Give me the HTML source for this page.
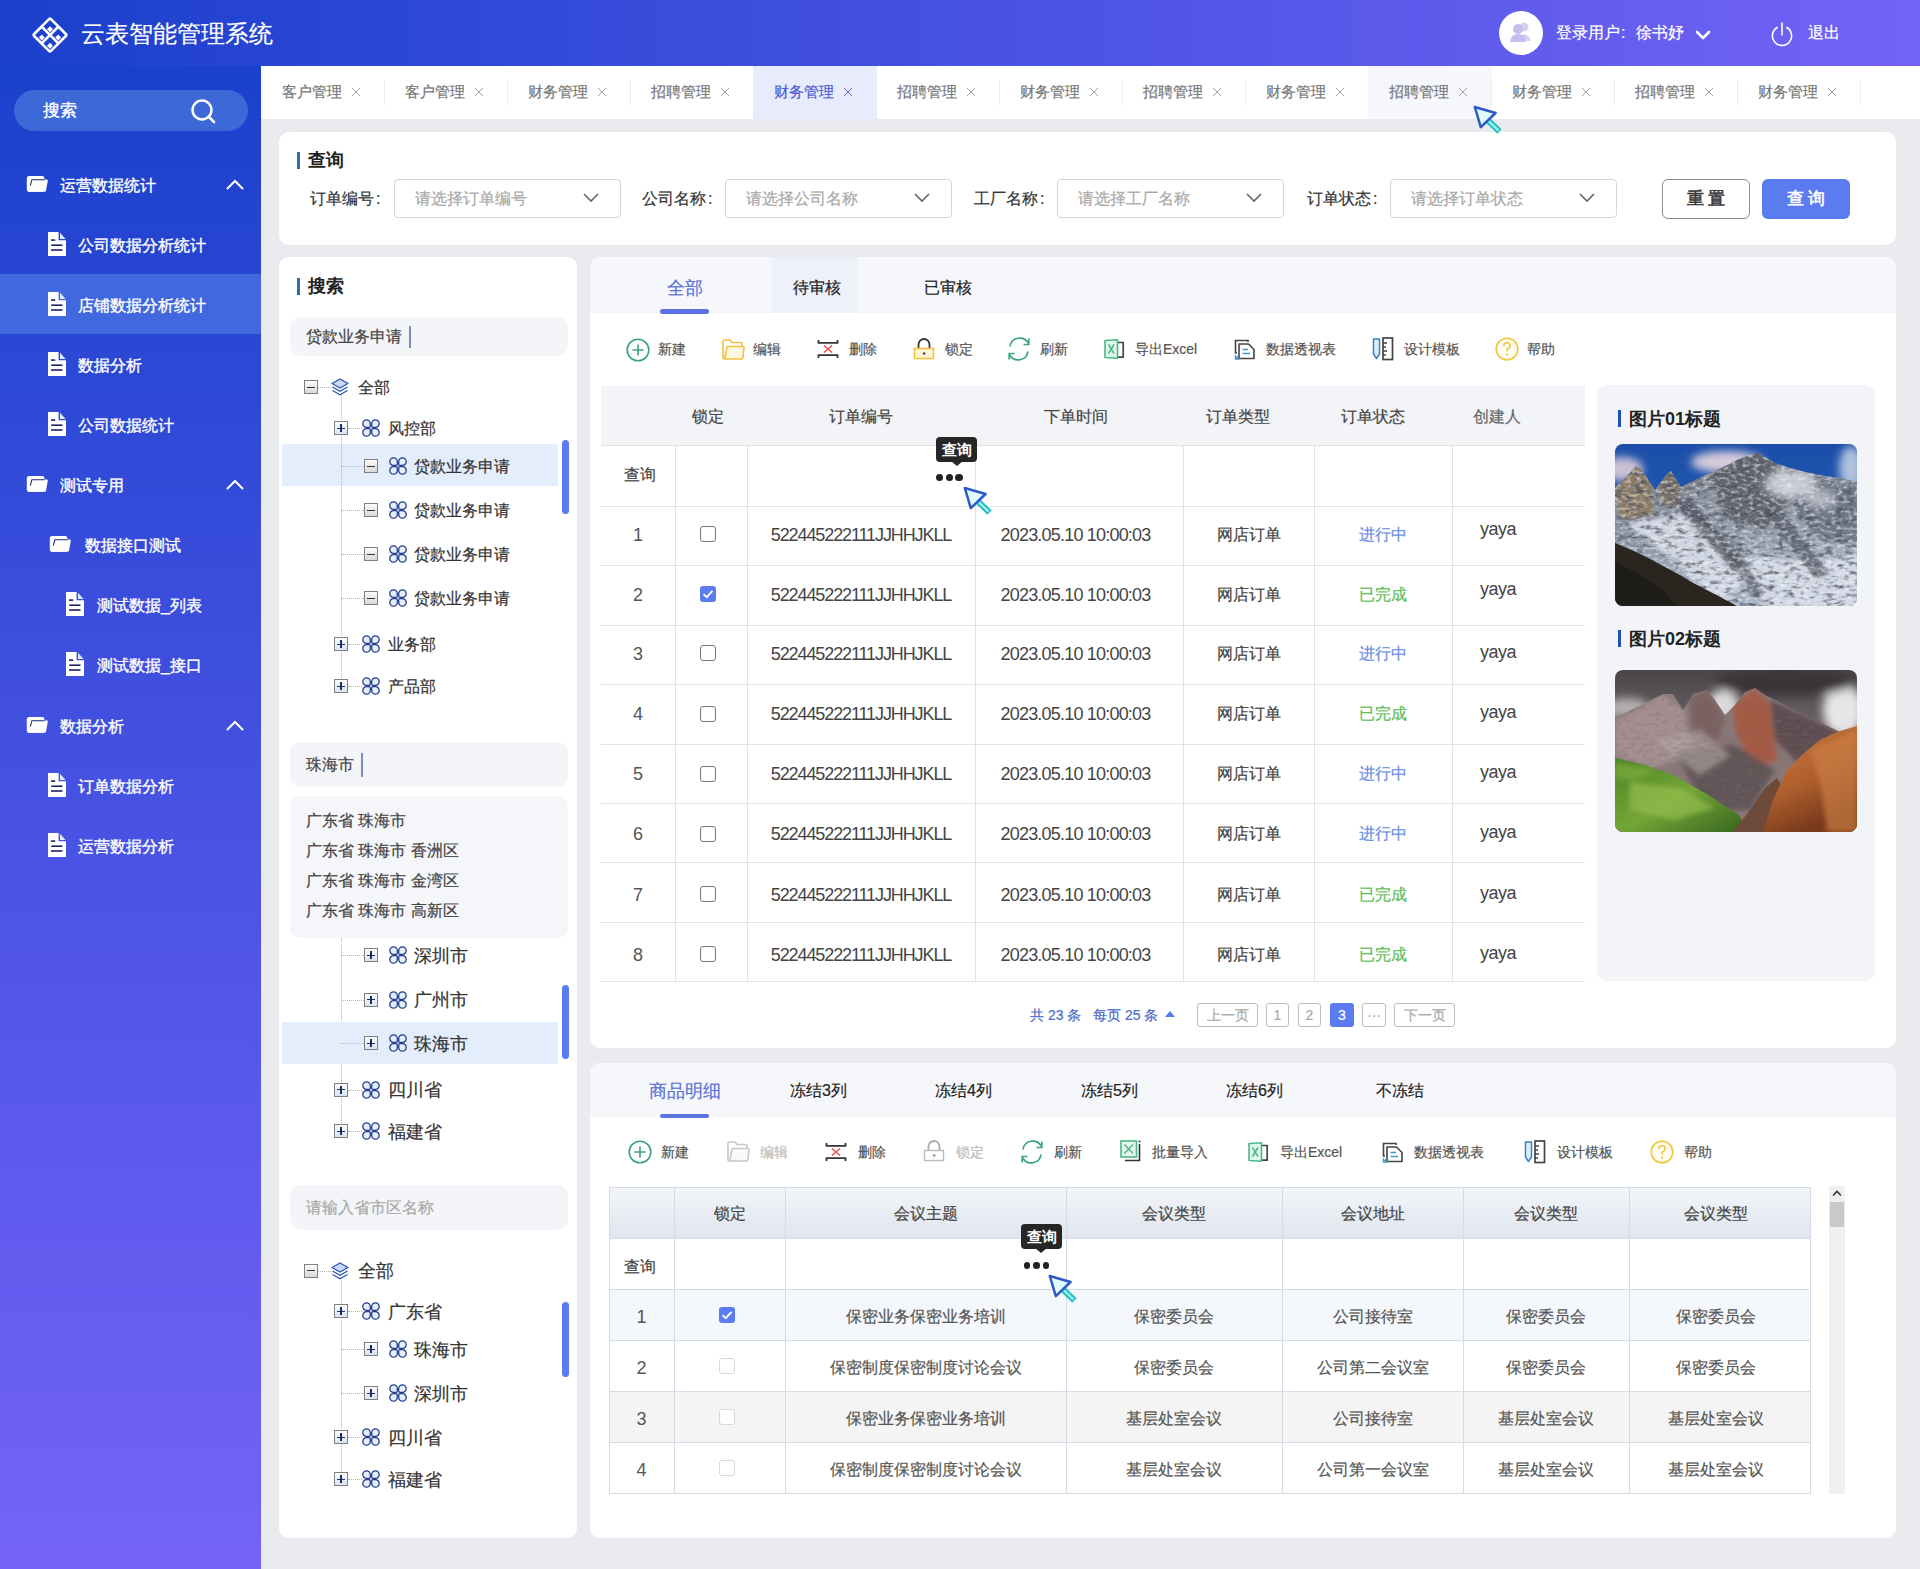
<!DOCTYPE html>
<html><head><meta charset="utf-8"><style>
*{box-sizing:border-box;margin:0;padding:0}
html,body{width:1920px;height:1569px;overflow:hidden}
body{font-family:"Liberation Sans",sans-serif;background:#e9ebef;position:relative;color:#333}
.a{position:absolute}
.t{position:absolute;white-space:nowrap;line-height:1;-webkit-text-stroke:0.2px currentColor}
.t[style*=bold]{-webkit-text-stroke:0}
.card{position:absolute;background:#fff;border-radius:10px}
.side-t{color:#fff;font-size:16px;-webkit-text-stroke:0.35px #fff}
</style></head><body>
<div class="a" style="left:0;top:0;width:1920px;height:66px;background:linear-gradient(90deg,#1a40cc 0%,#7363f6 100%)"></div>
<svg class="a" style="left:30px;top:15px" width="40" height="40" viewBox="-20 -20 40 40">
<g transform="rotate(45)">
<path fill="#fff" fill-rule="evenodd" d="M-10.5,-13.2 H10.5 A2.7,2.7 0 0 1 13.2,-10.5 V10.5 A2.7,2.7 0 0 1 10.5,13.2 H-10.5 A2.7,2.7 0 0 1 -13.2,10.5 V-10.5 A2.7,2.7 0 0 1 -10.5,-13.2 Z M-10.6,-10.6 H-1.3 V-1.3 H-10.6 Z M1.3,-10.6 H10.6 V-1.3 H1.3 Z M-10.6,1.3 H-1.3 V10.6 H-10.6 Z M1.3,1.3 H10.6 V10.6 H1.3 Z"/>
<rect x="-6.1" y="-6.1" width="4.2" height="4.2" fill="#fff"/><rect x="5.5" y="-6.1" width="4.2" height="4.2" fill="#fff"/>
<rect x="-6.1" y="5.5" width="4.2" height="4.2" fill="#fff"/><rect x="5.5" y="5.5" width="4.2" height="4.2" fill="#fff"/>
</g></svg>
<div class="t" style="left:81px;top:22px;font-size:24px;color:#fff">云表智能管理系统</div>
<div class="a" style="left:1499px;top:11px;width:44px;height:44px;border-radius:50%;background:#fff"></div>
<svg class="a" style="left:1507px;top:19px" width="28" height="28" viewBox="0 0 28 28">
<circle cx="17" cy="8" r="4.5" fill="#d6d2f4"/><path d="M14 16 Q22 14 24 22 L14 22Z" fill="#d6d2f4"/>
<circle cx="11" cy="10" r="5" fill="#c4bff0"/><path d="M3 23 Q4 15 11 15 Q18 15 19 23 Z" fill="#c4bff0"/></svg>
<div class="t" style="left:1556px;top:25px;font-size:16px;color:#fff">登录用户</div>
<div class="t" style="left:1621px;top:25px;font-size:16px;color:#fff">:</div>
<div class="t" style="left:1636px;top:25px;font-size:16px;color:#fff">徐书妤</div>
<svg class="a" style="left:1695px;top:29px" width="16" height="12" viewBox="0 0 16 12"><path d="M2 3 L8 9 L14 3" stroke="#fff" stroke-width="2.6" fill="none" stroke-linecap="round" stroke-linejoin="round"/></svg>
<svg class="a" style="left:1769px;top:21px" width="26" height="26" viewBox="0 0 26 26"><path d="M8.2 6.5 A9.6 9.6 0 1 0 17.8 6.5" stroke="#fff" stroke-width="1.6" fill="none" stroke-linecap="round"/><path d="M13 2 V14" stroke="#fff" stroke-width="1.6" stroke-linecap="round"/></svg>
<div class="t" style="left:1808px;top:25px;font-size:16px;color:#fff">退出</div>
<div class="a" style="left:0;top:66px;width:261px;height:1503px;background:linear-gradient(180deg,#1a41cc 0%,#7563f8 100%)"></div>
<div class="a" style="left:14px;top:90px;width:234px;height:41px;border-radius:21px;background:#3d68d8"></div>
<div class="t side-t" style="left:43px;top:102px;font-size:17px">搜索</div>
<svg class="a" style="left:189px;top:97px" width="28" height="28" viewBox="0 0 28 28"><circle cx="13" cy="13" r="9.5" stroke="#fff" stroke-width="2.4" fill="none"/><path d="M20 20 L25 25" stroke="#fff" stroke-width="2.6" stroke-linecap="round"/></svg>
<div class="a" style="left:0;top:274px;width:261px;height:60px;background:#4168de"></div>
<svg class="a" style="left:26px;top:175px" width="23" height="18" viewBox="0 0 23 18"><rect x="0.8" y="1" width="17.6" height="15.8" rx="2.2" fill="#fff"/><path d="M5.8 4.6 H20.8 Q22 4.6 21.8 5.8 L20 15.6 Q19.8 16.8 18.6 16.8 H2 Z" fill="#fff"/><path d="M18.6 4.7 H5.9 L4.3 10.6" fill="none" stroke="#1c2c72" stroke-width="1.1"/></svg><div class="t side-t" style="left:60px;top:177.5px">运营数据统计</div><svg class="a" style="left:226px;top:179px" width="18" height="11" viewBox="0 0 18 11"><path d="M1.5 9.5 L9 2 L16.5 9.5" stroke="#fff" stroke-width="2" fill="none" stroke-linecap="round"/></svg>
<svg class="a" style="left:48px;top:232px" width="18" height="24" viewBox="0 0 18 24"><path d="M0 0 H10.6 V8.2 H18 V24 H0Z" fill="#fff"/><path d="M12 0.8 V7 H17.6Z" fill="#dcecff"/><rect x="3" y="7.3" width="4.2" height="1.6" fill="#1c2466"/><rect x="3.3" y="12.4" width="11.2" height="1.6" fill="#1c2466"/><rect x="3" y="17.2" width="11.5" height="1.6" fill="#1c2466"/></svg><div class="t side-t" style="left:78px;top:237.5px">公司数据分析统计</div>
<svg class="a" style="left:48px;top:292px" width="18" height="24" viewBox="0 0 18 24"><path d="M0 0 H10.6 V8.2 H18 V24 H0Z" fill="#fff"/><path d="M12 0.8 V7 H17.6Z" fill="#dcecff"/><rect x="3" y="7.3" width="4.2" height="1.6" fill="#1c2466"/><rect x="3.3" y="12.4" width="11.2" height="1.6" fill="#1c2466"/><rect x="3" y="17.2" width="11.5" height="1.6" fill="#1c2466"/></svg><div class="t side-t" style="left:78px;top:297.5px">店铺数据分析统计</div>
<svg class="a" style="left:48px;top:352px" width="18" height="24" viewBox="0 0 18 24"><path d="M0 0 H10.6 V8.2 H18 V24 H0Z" fill="#fff"/><path d="M12 0.8 V7 H17.6Z" fill="#dcecff"/><rect x="3" y="7.3" width="4.2" height="1.6" fill="#1c2466"/><rect x="3.3" y="12.4" width="11.2" height="1.6" fill="#1c2466"/><rect x="3" y="17.2" width="11.5" height="1.6" fill="#1c2466"/></svg><div class="t side-t" style="left:78px;top:357.5px">数据分析</div>
<svg class="a" style="left:48px;top:412px" width="18" height="24" viewBox="0 0 18 24"><path d="M0 0 H10.6 V8.2 H18 V24 H0Z" fill="#fff"/><path d="M12 0.8 V7 H17.6Z" fill="#dcecff"/><rect x="3" y="7.3" width="4.2" height="1.6" fill="#1c2466"/><rect x="3.3" y="12.4" width="11.2" height="1.6" fill="#1c2466"/><rect x="3" y="17.2" width="11.5" height="1.6" fill="#1c2466"/></svg><div class="t side-t" style="left:78px;top:417.5px">公司数据统计</div>
<svg class="a" style="left:26px;top:475px" width="23" height="18" viewBox="0 0 23 18"><rect x="0.8" y="1" width="17.6" height="15.8" rx="2.2" fill="#fff"/><path d="M5.8 4.6 H20.8 Q22 4.6 21.8 5.8 L20 15.6 Q19.8 16.8 18.6 16.8 H2 Z" fill="#fff"/><path d="M18.6 4.7 H5.9 L4.3 10.6" fill="none" stroke="#1c2c72" stroke-width="1.1"/></svg><div class="t side-t" style="left:60px;top:477.5px">测试专用</div><svg class="a" style="left:226px;top:479px" width="18" height="11" viewBox="0 0 18 11"><path d="M1.5 9.5 L9 2 L16.5 9.5" stroke="#fff" stroke-width="2" fill="none" stroke-linecap="round"/></svg>
<svg class="a" style="left:49px;top:535px" width="23" height="18" viewBox="0 0 23 18"><rect x="0.8" y="1" width="17.6" height="15.8" rx="2.2" fill="#fff"/><path d="M5.8 4.6 H20.8 Q22 4.6 21.8 5.8 L20 15.6 Q19.8 16.8 18.6 16.8 H2 Z" fill="#fff"/><path d="M18.6 4.7 H5.9 L4.3 10.6" fill="none" stroke="#1c2c72" stroke-width="1.1"/></svg><div class="t side-t" style="left:85px;top:537.5px">数据接口测试</div>
<svg class="a" style="left:66px;top:592px" width="18" height="24" viewBox="0 0 18 24"><path d="M0 0 H10.6 V8.2 H18 V24 H0Z" fill="#fff"/><path d="M12 0.8 V7 H17.6Z" fill="#dcecff"/><rect x="3" y="7.3" width="4.2" height="1.6" fill="#1c2466"/><rect x="3.3" y="12.4" width="11.2" height="1.6" fill="#1c2466"/><rect x="3" y="17.2" width="11.5" height="1.6" fill="#1c2466"/></svg><div class="t side-t" style="left:97px;top:597.5px">测试数据_列表</div>
<svg class="a" style="left:66px;top:652px" width="18" height="24" viewBox="0 0 18 24"><path d="M0 0 H10.6 V8.2 H18 V24 H0Z" fill="#fff"/><path d="M12 0.8 V7 H17.6Z" fill="#dcecff"/><rect x="3" y="7.3" width="4.2" height="1.6" fill="#1c2466"/><rect x="3.3" y="12.4" width="11.2" height="1.6" fill="#1c2466"/><rect x="3" y="17.2" width="11.5" height="1.6" fill="#1c2466"/></svg><div class="t side-t" style="left:97px;top:657.5px">测试数据_接口</div>
<svg class="a" style="left:26px;top:716px" width="23" height="18" viewBox="0 0 23 18"><rect x="0.8" y="1" width="17.6" height="15.8" rx="2.2" fill="#fff"/><path d="M5.8 4.6 H20.8 Q22 4.6 21.8 5.8 L20 15.6 Q19.8 16.8 18.6 16.8 H2 Z" fill="#fff"/><path d="M18.6 4.7 H5.9 L4.3 10.6" fill="none" stroke="#1c2c72" stroke-width="1.1"/></svg><div class="t side-t" style="left:60px;top:718.5px">数据分析</div><svg class="a" style="left:226px;top:720px" width="18" height="11" viewBox="0 0 18 11"><path d="M1.5 9.5 L9 2 L16.5 9.5" stroke="#fff" stroke-width="2" fill="none" stroke-linecap="round"/></svg>
<svg class="a" style="left:48px;top:773px" width="18" height="24" viewBox="0 0 18 24"><path d="M0 0 H10.6 V8.2 H18 V24 H0Z" fill="#fff"/><path d="M12 0.8 V7 H17.6Z" fill="#dcecff"/><rect x="3" y="7.3" width="4.2" height="1.6" fill="#1c2466"/><rect x="3.3" y="12.4" width="11.2" height="1.6" fill="#1c2466"/><rect x="3" y="17.2" width="11.5" height="1.6" fill="#1c2466"/></svg><div class="t side-t" style="left:78px;top:778.5px">订单数据分析</div>
<svg class="a" style="left:48px;top:833px" width="18" height="24" viewBox="0 0 18 24"><path d="M0 0 H10.6 V8.2 H18 V24 H0Z" fill="#fff"/><path d="M12 0.8 V7 H17.6Z" fill="#dcecff"/><rect x="3" y="7.3" width="4.2" height="1.6" fill="#1c2466"/><rect x="3.3" y="12.4" width="11.2" height="1.6" fill="#1c2466"/><rect x="3" y="17.2" width="11.5" height="1.6" fill="#1c2466"/></svg><div class="t side-t" style="left:78px;top:838.5px">运营数据分析</div>
<div class="a" style="left:261px;top:66px;width:1659px;height:53px;background:#fff"></div>
<div class="t" style="left:282px;top:84px;font-size:15px;color:#777">客户管理</div>
<svg class="a" style="left:351px;top:87px" width="10" height="10" viewBox="0 0 10 10"><path d="M1 1 L9 9 M9 1 L1 9" stroke="#999" stroke-width="0.9"/></svg>
<div class="a" style="left:384px;top:80px;width:1px;height:25px;background:#ececec"></div>
<div class="t" style="left:405px;top:84px;font-size:15px;color:#777">客户管理</div>
<svg class="a" style="left:474px;top:87px" width="10" height="10" viewBox="0 0 10 10"><path d="M1 1 L9 9 M9 1 L1 9" stroke="#999" stroke-width="0.9"/></svg>
<div class="a" style="left:507px;top:80px;width:1px;height:25px;background:#ececec"></div>
<div class="t" style="left:528px;top:84px;font-size:15px;color:#777">财务管理</div>
<svg class="a" style="left:597px;top:87px" width="10" height="10" viewBox="0 0 10 10"><path d="M1 1 L9 9 M9 1 L1 9" stroke="#999" stroke-width="0.9"/></svg>
<div class="a" style="left:630px;top:80px;width:1px;height:25px;background:#ececec"></div>
<div class="t" style="left:651px;top:84px;font-size:15px;color:#777">招聘管理</div>
<svg class="a" style="left:720px;top:87px" width="10" height="10" viewBox="0 0 10 10"><path d="M1 1 L9 9 M9 1 L1 9" stroke="#999" stroke-width="0.9"/></svg>
<div class="a" style="left:753px;top:66px;width:124px;height:53px;background:#e8ebfb"></div>
<div class="t" style="left:774px;top:84px;font-size:15px;color:#4a5bd6">财务管理</div>
<svg class="a" style="left:843px;top:87px" width="10" height="10" viewBox="0 0 10 10"><path d="M1 1 L9 9 M9 1 L1 9" stroke="#4a5bd6" stroke-width="0.9"/></svg>
<div class="t" style="left:897px;top:84px;font-size:15px;color:#777">招聘管理</div>
<svg class="a" style="left:966px;top:87px" width="10" height="10" viewBox="0 0 10 10"><path d="M1 1 L9 9 M9 1 L1 9" stroke="#999" stroke-width="0.9"/></svg>
<div class="a" style="left:999px;top:80px;width:1px;height:25px;background:#ececec"></div>
<div class="t" style="left:1020px;top:84px;font-size:15px;color:#777">财务管理</div>
<svg class="a" style="left:1089px;top:87px" width="10" height="10" viewBox="0 0 10 10"><path d="M1 1 L9 9 M9 1 L1 9" stroke="#999" stroke-width="0.9"/></svg>
<div class="a" style="left:1122px;top:80px;width:1px;height:25px;background:#ececec"></div>
<div class="t" style="left:1143px;top:84px;font-size:15px;color:#777">招聘管理</div>
<svg class="a" style="left:1212px;top:87px" width="10" height="10" viewBox="0 0 10 10"><path d="M1 1 L9 9 M9 1 L1 9" stroke="#999" stroke-width="0.9"/></svg>
<div class="a" style="left:1245px;top:80px;width:1px;height:25px;background:#ececec"></div>
<div class="t" style="left:1266px;top:84px;font-size:15px;color:#777">财务管理</div>
<svg class="a" style="left:1335px;top:87px" width="10" height="10" viewBox="0 0 10 10"><path d="M1 1 L9 9 M9 1 L1 9" stroke="#999" stroke-width="0.9"/></svg>
<div class="a" style="left:1368px;top:80px;width:1px;height:25px;background:#ececec"></div>
<div class="a" style="left:1368px;top:66px;width:124px;height:53px;background:#f6f7fc"></div>
<div class="t" style="left:1389px;top:84px;font-size:15px;color:#777">招聘管理</div>
<svg class="a" style="left:1458px;top:87px" width="10" height="10" viewBox="0 0 10 10"><path d="M1 1 L9 9 M9 1 L1 9" stroke="#999" stroke-width="0.9"/></svg>
<div class="a" style="left:1491px;top:80px;width:1px;height:25px;background:#ececec"></div>
<div class="t" style="left:1512px;top:84px;font-size:15px;color:#777">财务管理</div>
<svg class="a" style="left:1581px;top:87px" width="10" height="10" viewBox="0 0 10 10"><path d="M1 1 L9 9 M9 1 L1 9" stroke="#999" stroke-width="0.9"/></svg>
<div class="a" style="left:1614px;top:80px;width:1px;height:25px;background:#ececec"></div>
<div class="t" style="left:1635px;top:84px;font-size:15px;color:#777">招聘管理</div>
<svg class="a" style="left:1704px;top:87px" width="10" height="10" viewBox="0 0 10 10"><path d="M1 1 L9 9 M9 1 L1 9" stroke="#999" stroke-width="0.9"/></svg>
<div class="a" style="left:1737px;top:80px;width:1px;height:25px;background:#ececec"></div>
<div class="t" style="left:1758px;top:84px;font-size:15px;color:#777">财务管理</div>
<svg class="a" style="left:1827px;top:87px" width="10" height="10" viewBox="0 0 10 10"><path d="M1 1 L9 9 M9 1 L1 9" stroke="#999" stroke-width="0.9"/></svg>
<div class="a" style="left:1860px;top:80px;width:1px;height:25px;background:#ececec"></div>
<div class="card" style="left:279px;top:132px;width:1617px;height:113px"></div>
<div class="a" style="left:297px;top:152px;width:3px;height:17px;background:#2d6db3"></div>
<div class="t" style="left:308px;top:151px;font-size:18px;font-weight:bold;color:#222">查询</div>
<div class="t" style="left:310px;top:191px;font-size:16px;color:#333">订单编号</div>
<div class="t" style="left:376px;top:191px;font-size:16px;color:#333">:</div>
<div class="a" style="left:394px;top:179px;width:227px;height:39px;border:1px solid #d5d5d5;border-radius:4px;background:#fff"></div>
<div class="t" style="left:415px;top:191px;font-size:16px;color:#a8a8a8">请选择订单编号</div>
<svg class="a" style="left:582px;top:192px" width="18" height="12" viewBox="0 0 18 12"><path d="M2 2 L9 9 L16 2" stroke="#666" stroke-width="1.6" fill="none"/></svg>
<div class="t" style="left:642px;top:191px;font-size:16px;color:#333">公司名称</div>
<div class="t" style="left:708px;top:191px;font-size:16px;color:#333">:</div>
<div class="a" style="left:725px;top:179px;width:227px;height:39px;border:1px solid #d5d5d5;border-radius:4px;background:#fff"></div>
<div class="t" style="left:746px;top:191px;font-size:16px;color:#a8a8a8">请选择公司名称</div>
<svg class="a" style="left:913px;top:192px" width="18" height="12" viewBox="0 0 18 12"><path d="M2 2 L9 9 L16 2" stroke="#666" stroke-width="1.6" fill="none"/></svg>
<div class="t" style="left:974px;top:191px;font-size:16px;color:#333">工厂名称</div>
<div class="t" style="left:1040px;top:191px;font-size:16px;color:#333">:</div>
<div class="a" style="left:1057px;top:179px;width:227px;height:39px;border:1px solid #d5d5d5;border-radius:4px;background:#fff"></div>
<div class="t" style="left:1078px;top:191px;font-size:16px;color:#a8a8a8">请选择工厂名称</div>
<svg class="a" style="left:1245px;top:192px" width="18" height="12" viewBox="0 0 18 12"><path d="M2 2 L9 9 L16 2" stroke="#666" stroke-width="1.6" fill="none"/></svg>
<div class="t" style="left:1307px;top:191px;font-size:16px;color:#333">订单状态</div>
<div class="t" style="left:1373px;top:191px;font-size:16px;color:#333">:</div>
<div class="a" style="left:1390px;top:179px;width:227px;height:39px;border:1px solid #d5d5d5;border-radius:4px;background:#fff"></div>
<div class="t" style="left:1411px;top:191px;font-size:16px;color:#a8a8a8">请选择订单状态</div>
<svg class="a" style="left:1578px;top:192px" width="18" height="12" viewBox="0 0 18 12"><path d="M2 2 L9 9 L16 2" stroke="#666" stroke-width="1.6" fill="none"/></svg>
<div class="a" style="left:1662px;top:179px;width:88px;height:40px;border:1px solid #8c8c8c;border-radius:6px;background:#fff"></div>
<div class="t" style="left:1687px;top:190px;font-size:17px;color:#333;letter-spacing:4px;font-weight:normal;-webkit-text-stroke:0.6px #3a3a3a">重置</div>
<div class="a" style="left:1762px;top:179px;width:88px;height:40px;border-radius:6px;background:#5a7cf0"></div>
<div class="t" style="left:1787px;top:190px;font-size:17px;color:#fff;letter-spacing:4px;-webkit-text-stroke:0.6px #fff">查询</div>
<div class="card" style="left:279px;top:257px;width:298px;height:1281px"></div>
<div class="a" style="left:297px;top:278px;width:3px;height:17px;background:#2d6db3"></div>
<div class="t" style="left:308px;top:277px;font-size:18px;font-weight:bold;color:#222">搜索</div>
<div class="a" style="left:290px;top:317px;width:278px;height:39px;border-radius:10px;background:#f3f5f8"></div>
<div class="t" style="left:306px;top:328.5px;font-size:16px;color:#444">贷款业务申请</div>
<div class="a" style="left:409px;top:326px;width:2px;height:22px;background:#7a8fc0"></div>
<div class="a" style="left:282px;top:444px;width:276px;height:42px;background:#e3edfb"></div>
<div class="a" style="left:341px;top:395px;width:0;height:291px;border-left:1px dotted #b4b4b4"></div>
<div class="a" style="left:304px;top:380px;width:14px;height:14px;border:1px solid #808080;background:linear-gradient(180deg,#fdfdfd 0%,#d8d8d8 100%)"></div><div class="a" style="left:307px;top:386.5px;width:8px;height:1.2px;background:#333"></div><div class="a" style="left:318px;top:387px;width:13px;height:0;border-top:1px dotted #b4b4b4"></div><svg class="a" style="left:331px;top:378px" width="18" height="18" viewBox="0 0 18 18"><path d="M9 1 L17 5.5 L9 10 L1 5.5Z" fill="#c9daf6" stroke="#2b52b4" stroke-width="1.3" stroke-linejoin="round"/><path d="M1.5 9 L9 13.2 L16.5 9" fill="none" stroke="#2b52b4" stroke-width="1.3"/><path d="M1.5 12.5 L9 16.7 L16.5 12.5" fill="none" stroke="#2b52b4" stroke-width="1.3"/></svg><div class="t" style="left:358px;top:379.5px;font-size:16px;color:#333">全部</div>
<div class="a" style="left:334px;top:421px;width:14px;height:14px;border:1px solid #808080;background:linear-gradient(180deg,#fdfdfd 0%,#d9e3f3 100%)"></div><div class="a" style="left:337px;top:427.5px;width:8px;height:1.2px;background:#1c2f66"></div><div class="a" style="left:340.4px;top:424px;width:1.2px;height:8px;background:#1c2f66"></div><div class="a" style="left:348px;top:428px;width:14px;height:0;border-top:1px dotted #b4b4b4"></div><svg class="a" style="left:362px;top:419px" width="18" height="18" viewBox="0 0 18 18"><g fill="#e6eefc" stroke="#223f8f" stroke-width="1.3"><path d="M4.5 0.8 H4.6000000000000005 A3.7 3.7 0 0 1 8.3 4.5 V7.1000000000000005 A1.2 1.2 0 0 1 7.1000000000000005 8.3 H4.5 A3.7 3.7 0 0 1 0.8 4.6000000000000005 V4.5 A3.7 3.7 0 0 1 4.5 0.8Z"/><path d="M13.399999999999999 0.8 H13.5 A3.7 3.7 0 0 1 17.2 4.5 V4.6000000000000005 A3.7 3.7 0 0 1 13.5 8.3 H10.899999999999999 A1.2 1.2 0 0 1 9.7 7.1000000000000005 V4.5 A3.7 3.7 0 0 1 13.399999999999999 0.8Z"/><path d="M4.5 9.7 H7.1000000000000005 A1.2 1.2 0 0 1 8.3 10.899999999999999 V13.5 A3.7 3.7 0 0 1 4.6000000000000005 17.2 H4.5 A3.7 3.7 0 0 1 0.8 13.5 V13.399999999999999 A3.7 3.7 0 0 1 4.5 9.7Z"/><path d="M10.899999999999999 9.7 H13.5 A3.7 3.7 0 0 1 17.2 13.399999999999999 V13.5 A3.7 3.7 0 0 1 13.5 17.2 H13.399999999999999 A3.7 3.7 0 0 1 9.7 13.5 V10.899999999999999 A1.2 1.2 0 0 1 10.899999999999999 9.7Z"/></g></svg><div class="t" style="left:388px;top:420.5px;font-size:16px;color:#333">风控部</div>
<div class="a" style="left:341px;top:466px;width:23px;height:0;border-top:1px dotted #b4b4b4"></div><div class="a" style="left:364px;top:459px;width:14px;height:14px;border:1px solid #808080;background:linear-gradient(180deg,#fdfdfd 0%,#d8d8d8 100%)"></div><div class="a" style="left:367px;top:465.5px;width:8px;height:1.2px;background:#333"></div><svg class="a" style="left:389px;top:457px" width="18" height="18" viewBox="0 0 18 18"><g fill="#e6eefc" stroke="#223f8f" stroke-width="1.3"><path d="M4.5 0.8 H4.6000000000000005 A3.7 3.7 0 0 1 8.3 4.5 V7.1000000000000005 A1.2 1.2 0 0 1 7.1000000000000005 8.3 H4.5 A3.7 3.7 0 0 1 0.8 4.6000000000000005 V4.5 A3.7 3.7 0 0 1 4.5 0.8Z"/><path d="M13.399999999999999 0.8 H13.5 A3.7 3.7 0 0 1 17.2 4.5 V4.6000000000000005 A3.7 3.7 0 0 1 13.5 8.3 H10.899999999999999 A1.2 1.2 0 0 1 9.7 7.1000000000000005 V4.5 A3.7 3.7 0 0 1 13.399999999999999 0.8Z"/><path d="M4.5 9.7 H7.1000000000000005 A1.2 1.2 0 0 1 8.3 10.899999999999999 V13.5 A3.7 3.7 0 0 1 4.6000000000000005 17.2 H4.5 A3.7 3.7 0 0 1 0.8 13.5 V13.399999999999999 A3.7 3.7 0 0 1 4.5 9.7Z"/><path d="M10.899999999999999 9.7 H13.5 A3.7 3.7 0 0 1 17.2 13.399999999999999 V13.5 A3.7 3.7 0 0 1 13.5 17.2 H13.399999999999999 A3.7 3.7 0 0 1 9.7 13.5 V10.899999999999999 A1.2 1.2 0 0 1 10.899999999999999 9.7Z"/></g></svg><div class="t" style="left:414px;top:458.5px;font-size:16px;color:#333">贷款业务申请</div>
<div class="a" style="left:341px;top:510px;width:23px;height:0;border-top:1px dotted #b4b4b4"></div><div class="a" style="left:364px;top:503px;width:14px;height:14px;border:1px solid #808080;background:linear-gradient(180deg,#fdfdfd 0%,#d8d8d8 100%)"></div><div class="a" style="left:367px;top:509.5px;width:8px;height:1.2px;background:#333"></div><svg class="a" style="left:389px;top:501px" width="18" height="18" viewBox="0 0 18 18"><g fill="#e6eefc" stroke="#223f8f" stroke-width="1.3"><path d="M4.5 0.8 H4.6000000000000005 A3.7 3.7 0 0 1 8.3 4.5 V7.1000000000000005 A1.2 1.2 0 0 1 7.1000000000000005 8.3 H4.5 A3.7 3.7 0 0 1 0.8 4.6000000000000005 V4.5 A3.7 3.7 0 0 1 4.5 0.8Z"/><path d="M13.399999999999999 0.8 H13.5 A3.7 3.7 0 0 1 17.2 4.5 V4.6000000000000005 A3.7 3.7 0 0 1 13.5 8.3 H10.899999999999999 A1.2 1.2 0 0 1 9.7 7.1000000000000005 V4.5 A3.7 3.7 0 0 1 13.399999999999999 0.8Z"/><path d="M4.5 9.7 H7.1000000000000005 A1.2 1.2 0 0 1 8.3 10.899999999999999 V13.5 A3.7 3.7 0 0 1 4.6000000000000005 17.2 H4.5 A3.7 3.7 0 0 1 0.8 13.5 V13.399999999999999 A3.7 3.7 0 0 1 4.5 9.7Z"/><path d="M10.899999999999999 9.7 H13.5 A3.7 3.7 0 0 1 17.2 13.399999999999999 V13.5 A3.7 3.7 0 0 1 13.5 17.2 H13.399999999999999 A3.7 3.7 0 0 1 9.7 13.5 V10.899999999999999 A1.2 1.2 0 0 1 10.899999999999999 9.7Z"/></g></svg><div class="t" style="left:414px;top:502.5px;font-size:16px;color:#333">贷款业务申请</div>
<div class="a" style="left:341px;top:554px;width:23px;height:0;border-top:1px dotted #b4b4b4"></div><div class="a" style="left:364px;top:547px;width:14px;height:14px;border:1px solid #808080;background:linear-gradient(180deg,#fdfdfd 0%,#d8d8d8 100%)"></div><div class="a" style="left:367px;top:553.5px;width:8px;height:1.2px;background:#333"></div><svg class="a" style="left:389px;top:545px" width="18" height="18" viewBox="0 0 18 18"><g fill="#e6eefc" stroke="#223f8f" stroke-width="1.3"><path d="M4.5 0.8 H4.6000000000000005 A3.7 3.7 0 0 1 8.3 4.5 V7.1000000000000005 A1.2 1.2 0 0 1 7.1000000000000005 8.3 H4.5 A3.7 3.7 0 0 1 0.8 4.6000000000000005 V4.5 A3.7 3.7 0 0 1 4.5 0.8Z"/><path d="M13.399999999999999 0.8 H13.5 A3.7 3.7 0 0 1 17.2 4.5 V4.6000000000000005 A3.7 3.7 0 0 1 13.5 8.3 H10.899999999999999 A1.2 1.2 0 0 1 9.7 7.1000000000000005 V4.5 A3.7 3.7 0 0 1 13.399999999999999 0.8Z"/><path d="M4.5 9.7 H7.1000000000000005 A1.2 1.2 0 0 1 8.3 10.899999999999999 V13.5 A3.7 3.7 0 0 1 4.6000000000000005 17.2 H4.5 A3.7 3.7 0 0 1 0.8 13.5 V13.399999999999999 A3.7 3.7 0 0 1 4.5 9.7Z"/><path d="M10.899999999999999 9.7 H13.5 A3.7 3.7 0 0 1 17.2 13.399999999999999 V13.5 A3.7 3.7 0 0 1 13.5 17.2 H13.399999999999999 A3.7 3.7 0 0 1 9.7 13.5 V10.899999999999999 A1.2 1.2 0 0 1 10.899999999999999 9.7Z"/></g></svg><div class="t" style="left:414px;top:546.5px;font-size:16px;color:#333">贷款业务申请</div>
<div class="a" style="left:341px;top:598px;width:23px;height:0;border-top:1px dotted #b4b4b4"></div><div class="a" style="left:364px;top:591px;width:14px;height:14px;border:1px solid #808080;background:linear-gradient(180deg,#fdfdfd 0%,#d8d8d8 100%)"></div><div class="a" style="left:367px;top:597.5px;width:8px;height:1.2px;background:#333"></div><svg class="a" style="left:389px;top:589px" width="18" height="18" viewBox="0 0 18 18"><g fill="#e6eefc" stroke="#223f8f" stroke-width="1.3"><path d="M4.5 0.8 H4.6000000000000005 A3.7 3.7 0 0 1 8.3 4.5 V7.1000000000000005 A1.2 1.2 0 0 1 7.1000000000000005 8.3 H4.5 A3.7 3.7 0 0 1 0.8 4.6000000000000005 V4.5 A3.7 3.7 0 0 1 4.5 0.8Z"/><path d="M13.399999999999999 0.8 H13.5 A3.7 3.7 0 0 1 17.2 4.5 V4.6000000000000005 A3.7 3.7 0 0 1 13.5 8.3 H10.899999999999999 A1.2 1.2 0 0 1 9.7 7.1000000000000005 V4.5 A3.7 3.7 0 0 1 13.399999999999999 0.8Z"/><path d="M4.5 9.7 H7.1000000000000005 A1.2 1.2 0 0 1 8.3 10.899999999999999 V13.5 A3.7 3.7 0 0 1 4.6000000000000005 17.2 H4.5 A3.7 3.7 0 0 1 0.8 13.5 V13.399999999999999 A3.7 3.7 0 0 1 4.5 9.7Z"/><path d="M10.899999999999999 9.7 H13.5 A3.7 3.7 0 0 1 17.2 13.399999999999999 V13.5 A3.7 3.7 0 0 1 13.5 17.2 H13.399999999999999 A3.7 3.7 0 0 1 9.7 13.5 V10.899999999999999 A1.2 1.2 0 0 1 10.899999999999999 9.7Z"/></g></svg><div class="t" style="left:414px;top:590.5px;font-size:16px;color:#333">贷款业务申请</div>
<div class="a" style="left:334px;top:637px;width:14px;height:14px;border:1px solid #808080;background:linear-gradient(180deg,#fdfdfd 0%,#d9e3f3 100%)"></div><div class="a" style="left:337px;top:643.5px;width:8px;height:1.2px;background:#1c2f66"></div><div class="a" style="left:340.4px;top:640px;width:1.2px;height:8px;background:#1c2f66"></div><div class="a" style="left:348px;top:644px;width:14px;height:0;border-top:1px dotted #b4b4b4"></div><svg class="a" style="left:362px;top:635px" width="18" height="18" viewBox="0 0 18 18"><g fill="#e6eefc" stroke="#223f8f" stroke-width="1.3"><path d="M4.5 0.8 H4.6000000000000005 A3.7 3.7 0 0 1 8.3 4.5 V7.1000000000000005 A1.2 1.2 0 0 1 7.1000000000000005 8.3 H4.5 A3.7 3.7 0 0 1 0.8 4.6000000000000005 V4.5 A3.7 3.7 0 0 1 4.5 0.8Z"/><path d="M13.399999999999999 0.8 H13.5 A3.7 3.7 0 0 1 17.2 4.5 V4.6000000000000005 A3.7 3.7 0 0 1 13.5 8.3 H10.899999999999999 A1.2 1.2 0 0 1 9.7 7.1000000000000005 V4.5 A3.7 3.7 0 0 1 13.399999999999999 0.8Z"/><path d="M4.5 9.7 H7.1000000000000005 A1.2 1.2 0 0 1 8.3 10.899999999999999 V13.5 A3.7 3.7 0 0 1 4.6000000000000005 17.2 H4.5 A3.7 3.7 0 0 1 0.8 13.5 V13.399999999999999 A3.7 3.7 0 0 1 4.5 9.7Z"/><path d="M10.899999999999999 9.7 H13.5 A3.7 3.7 0 0 1 17.2 13.399999999999999 V13.5 A3.7 3.7 0 0 1 13.5 17.2 H13.399999999999999 A3.7 3.7 0 0 1 9.7 13.5 V10.899999999999999 A1.2 1.2 0 0 1 10.899999999999999 9.7Z"/></g></svg><div class="t" style="left:388px;top:636.5px;font-size:16px;color:#333">业务部</div>
<div class="a" style="left:334px;top:679px;width:14px;height:14px;border:1px solid #808080;background:linear-gradient(180deg,#fdfdfd 0%,#d9e3f3 100%)"></div><div class="a" style="left:337px;top:685.5px;width:8px;height:1.2px;background:#1c2f66"></div><div class="a" style="left:340.4px;top:682px;width:1.2px;height:8px;background:#1c2f66"></div><div class="a" style="left:348px;top:686px;width:14px;height:0;border-top:1px dotted #b4b4b4"></div><svg class="a" style="left:362px;top:677px" width="18" height="18" viewBox="0 0 18 18"><g fill="#e6eefc" stroke="#223f8f" stroke-width="1.3"><path d="M4.5 0.8 H4.6000000000000005 A3.7 3.7 0 0 1 8.3 4.5 V7.1000000000000005 A1.2 1.2 0 0 1 7.1000000000000005 8.3 H4.5 A3.7 3.7 0 0 1 0.8 4.6000000000000005 V4.5 A3.7 3.7 0 0 1 4.5 0.8Z"/><path d="M13.399999999999999 0.8 H13.5 A3.7 3.7 0 0 1 17.2 4.5 V4.6000000000000005 A3.7 3.7 0 0 1 13.5 8.3 H10.899999999999999 A1.2 1.2 0 0 1 9.7 7.1000000000000005 V4.5 A3.7 3.7 0 0 1 13.399999999999999 0.8Z"/><path d="M4.5 9.7 H7.1000000000000005 A1.2 1.2 0 0 1 8.3 10.899999999999999 V13.5 A3.7 3.7 0 0 1 4.6000000000000005 17.2 H4.5 A3.7 3.7 0 0 1 0.8 13.5 V13.399999999999999 A3.7 3.7 0 0 1 4.5 9.7Z"/><path d="M10.899999999999999 9.7 H13.5 A3.7 3.7 0 0 1 17.2 13.399999999999999 V13.5 A3.7 3.7 0 0 1 13.5 17.2 H13.399999999999999 A3.7 3.7 0 0 1 9.7 13.5 V10.899999999999999 A1.2 1.2 0 0 1 10.899999999999999 9.7Z"/></g></svg><div class="t" style="left:388px;top:678.5px;font-size:16px;color:#333">产品部</div>
<div class="a" style="left:562px;top:440px;width:7px;height:74px;border-radius:4px;background:#5a7cf0"></div>
<div class="a" style="left:290px;top:742px;width:278px;height:45px;border-radius:10px;background:#f3f5f8"></div>
<div class="t" style="left:306px;top:756.5px;font-size:16px;color:#444">珠海市</div>
<div class="a" style="left:361px;top:753px;width:2px;height:24px;background:#7a8fc0"></div>
<div class="a" style="left:341px;top:937px;width:0;height:194px;border-left:1px dotted #b4b4b4"></div>
<div class="a" style="left:282px;top:1022px;width:276px;height:42px;background:#e3edfb"></div>
<div class="a" style="left:341px;top:955px;width:23px;height:0;border-top:1px dotted #b4b4b4"></div><div class="a" style="left:364px;top:948px;width:14px;height:14px;border:1px solid #808080;background:linear-gradient(180deg,#fdfdfd 0%,#d9e3f3 100%)"></div><div class="a" style="left:367px;top:954.5px;width:8px;height:1.2px;background:#1c2f66"></div><div class="a" style="left:370.4px;top:951px;width:1.2px;height:8px;background:#1c2f66"></div><svg class="a" style="left:389px;top:946px" width="18" height="18" viewBox="0 0 18 18"><g fill="#e6eefc" stroke="#223f8f" stroke-width="1.3"><path d="M4.5 0.8 H4.6000000000000005 A3.7 3.7 0 0 1 8.3 4.5 V7.1000000000000005 A1.2 1.2 0 0 1 7.1000000000000005 8.3 H4.5 A3.7 3.7 0 0 1 0.8 4.6000000000000005 V4.5 A3.7 3.7 0 0 1 4.5 0.8Z"/><path d="M13.399999999999999 0.8 H13.5 A3.7 3.7 0 0 1 17.2 4.5 V4.6000000000000005 A3.7 3.7 0 0 1 13.5 8.3 H10.899999999999999 A1.2 1.2 0 0 1 9.7 7.1000000000000005 V4.5 A3.7 3.7 0 0 1 13.399999999999999 0.8Z"/><path d="M4.5 9.7 H7.1000000000000005 A1.2 1.2 0 0 1 8.3 10.899999999999999 V13.5 A3.7 3.7 0 0 1 4.6000000000000005 17.2 H4.5 A3.7 3.7 0 0 1 0.8 13.5 V13.399999999999999 A3.7 3.7 0 0 1 4.5 9.7Z"/><path d="M10.899999999999999 9.7 H13.5 A3.7 3.7 0 0 1 17.2 13.399999999999999 V13.5 A3.7 3.7 0 0 1 13.5 17.2 H13.399999999999999 A3.7 3.7 0 0 1 9.7 13.5 V10.899999999999999 A1.2 1.2 0 0 1 10.899999999999999 9.7Z"/></g></svg><div class="t" style="left:414px;top:946.5px;font-size:18px;color:#333">深圳市</div>
<div class="a" style="left:341px;top:999.5px;width:23px;height:0;border-top:1px dotted #b4b4b4"></div><div class="a" style="left:364px;top:992.5px;width:14px;height:14px;border:1px solid #808080;background:linear-gradient(180deg,#fdfdfd 0%,#d9e3f3 100%)"></div><div class="a" style="left:367px;top:999.0px;width:8px;height:1.2px;background:#1c2f66"></div><div class="a" style="left:370.4px;top:995.5px;width:1.2px;height:8px;background:#1c2f66"></div><svg class="a" style="left:389px;top:990.5px" width="18" height="18" viewBox="0 0 18 18"><g fill="#e6eefc" stroke="#223f8f" stroke-width="1.3"><path d="M4.5 0.8 H4.6000000000000005 A3.7 3.7 0 0 1 8.3 4.5 V7.1000000000000005 A1.2 1.2 0 0 1 7.1000000000000005 8.3 H4.5 A3.7 3.7 0 0 1 0.8 4.6000000000000005 V4.5 A3.7 3.7 0 0 1 4.5 0.8Z"/><path d="M13.399999999999999 0.8 H13.5 A3.7 3.7 0 0 1 17.2 4.5 V4.6000000000000005 A3.7 3.7 0 0 1 13.5 8.3 H10.899999999999999 A1.2 1.2 0 0 1 9.7 7.1000000000000005 V4.5 A3.7 3.7 0 0 1 13.399999999999999 0.8Z"/><path d="M4.5 9.7 H7.1000000000000005 A1.2 1.2 0 0 1 8.3 10.899999999999999 V13.5 A3.7 3.7 0 0 1 4.6000000000000005 17.2 H4.5 A3.7 3.7 0 0 1 0.8 13.5 V13.399999999999999 A3.7 3.7 0 0 1 4.5 9.7Z"/><path d="M10.899999999999999 9.7 H13.5 A3.7 3.7 0 0 1 17.2 13.399999999999999 V13.5 A3.7 3.7 0 0 1 13.5 17.2 H13.399999999999999 A3.7 3.7 0 0 1 9.7 13.5 V10.899999999999999 A1.2 1.2 0 0 1 10.899999999999999 9.7Z"/></g></svg><div class="t" style="left:414px;top:991.0px;font-size:18px;color:#333">广州市</div>
<div class="a" style="left:341px;top:1043px;width:23px;height:0;border-top:1px dotted #b4b4b4"></div><div class="a" style="left:364px;top:1036px;width:14px;height:14px;border:1px solid #808080;background:linear-gradient(180deg,#fdfdfd 0%,#d9e3f3 100%)"></div><div class="a" style="left:367px;top:1042.5px;width:8px;height:1.2px;background:#1c2f66"></div><div class="a" style="left:370.4px;top:1039px;width:1.2px;height:8px;background:#1c2f66"></div><svg class="a" style="left:389px;top:1034px" width="18" height="18" viewBox="0 0 18 18"><g fill="#e6eefc" stroke="#223f8f" stroke-width="1.3"><path d="M4.5 0.8 H4.6000000000000005 A3.7 3.7 0 0 1 8.3 4.5 V7.1000000000000005 A1.2 1.2 0 0 1 7.1000000000000005 8.3 H4.5 A3.7 3.7 0 0 1 0.8 4.6000000000000005 V4.5 A3.7 3.7 0 0 1 4.5 0.8Z"/><path d="M13.399999999999999 0.8 H13.5 A3.7 3.7 0 0 1 17.2 4.5 V4.6000000000000005 A3.7 3.7 0 0 1 13.5 8.3 H10.899999999999999 A1.2 1.2 0 0 1 9.7 7.1000000000000005 V4.5 A3.7 3.7 0 0 1 13.399999999999999 0.8Z"/><path d="M4.5 9.7 H7.1000000000000005 A1.2 1.2 0 0 1 8.3 10.899999999999999 V13.5 A3.7 3.7 0 0 1 4.6000000000000005 17.2 H4.5 A3.7 3.7 0 0 1 0.8 13.5 V13.399999999999999 A3.7 3.7 0 0 1 4.5 9.7Z"/><path d="M10.899999999999999 9.7 H13.5 A3.7 3.7 0 0 1 17.2 13.399999999999999 V13.5 A3.7 3.7 0 0 1 13.5 17.2 H13.399999999999999 A3.7 3.7 0 0 1 9.7 13.5 V10.899999999999999 A1.2 1.2 0 0 1 10.899999999999999 9.7Z"/></g></svg><div class="t" style="left:414px;top:1034.5px;font-size:18px;color:#333">珠海市</div>
<div class="a" style="left:334px;top:1082.5px;width:14px;height:14px;border:1px solid #808080;background:linear-gradient(180deg,#fdfdfd 0%,#d9e3f3 100%)"></div><div class="a" style="left:337px;top:1089.0px;width:8px;height:1.2px;background:#1c2f66"></div><div class="a" style="left:340.4px;top:1085.5px;width:1.2px;height:8px;background:#1c2f66"></div><div class="a" style="left:348px;top:1089.5px;width:14px;height:0;border-top:1px dotted #b4b4b4"></div><svg class="a" style="left:362px;top:1080.5px" width="18" height="18" viewBox="0 0 18 18"><g fill="#e6eefc" stroke="#223f8f" stroke-width="1.3"><path d="M4.5 0.8 H4.6000000000000005 A3.7 3.7 0 0 1 8.3 4.5 V7.1000000000000005 A1.2 1.2 0 0 1 7.1000000000000005 8.3 H4.5 A3.7 3.7 0 0 1 0.8 4.6000000000000005 V4.5 A3.7 3.7 0 0 1 4.5 0.8Z"/><path d="M13.399999999999999 0.8 H13.5 A3.7 3.7 0 0 1 17.2 4.5 V4.6000000000000005 A3.7 3.7 0 0 1 13.5 8.3 H10.899999999999999 A1.2 1.2 0 0 1 9.7 7.1000000000000005 V4.5 A3.7 3.7 0 0 1 13.399999999999999 0.8Z"/><path d="M4.5 9.7 H7.1000000000000005 A1.2 1.2 0 0 1 8.3 10.899999999999999 V13.5 A3.7 3.7 0 0 1 4.6000000000000005 17.2 H4.5 A3.7 3.7 0 0 1 0.8 13.5 V13.399999999999999 A3.7 3.7 0 0 1 4.5 9.7Z"/><path d="M10.899999999999999 9.7 H13.5 A3.7 3.7 0 0 1 17.2 13.399999999999999 V13.5 A3.7 3.7 0 0 1 13.5 17.2 H13.399999999999999 A3.7 3.7 0 0 1 9.7 13.5 V10.899999999999999 A1.2 1.2 0 0 1 10.899999999999999 9.7Z"/></g></svg><div class="t" style="left:388px;top:1081.0px;font-size:18px;color:#333">四川省</div>
<div class="a" style="left:334px;top:1124px;width:14px;height:14px;border:1px solid #808080;background:linear-gradient(180deg,#fdfdfd 0%,#d9e3f3 100%)"></div><div class="a" style="left:337px;top:1130.5px;width:8px;height:1.2px;background:#1c2f66"></div><div class="a" style="left:340.4px;top:1127px;width:1.2px;height:8px;background:#1c2f66"></div><div class="a" style="left:348px;top:1131px;width:14px;height:0;border-top:1px dotted #b4b4b4"></div><svg class="a" style="left:362px;top:1122px" width="18" height="18" viewBox="0 0 18 18"><g fill="#e6eefc" stroke="#223f8f" stroke-width="1.3"><path d="M4.5 0.8 H4.6000000000000005 A3.7 3.7 0 0 1 8.3 4.5 V7.1000000000000005 A1.2 1.2 0 0 1 7.1000000000000005 8.3 H4.5 A3.7 3.7 0 0 1 0.8 4.6000000000000005 V4.5 A3.7 3.7 0 0 1 4.5 0.8Z"/><path d="M13.399999999999999 0.8 H13.5 A3.7 3.7 0 0 1 17.2 4.5 V4.6000000000000005 A3.7 3.7 0 0 1 13.5 8.3 H10.899999999999999 A1.2 1.2 0 0 1 9.7 7.1000000000000005 V4.5 A3.7 3.7 0 0 1 13.399999999999999 0.8Z"/><path d="M4.5 9.7 H7.1000000000000005 A1.2 1.2 0 0 1 8.3 10.899999999999999 V13.5 A3.7 3.7 0 0 1 4.6000000000000005 17.2 H4.5 A3.7 3.7 0 0 1 0.8 13.5 V13.399999999999999 A3.7 3.7 0 0 1 4.5 9.7Z"/><path d="M10.899999999999999 9.7 H13.5 A3.7 3.7 0 0 1 17.2 13.399999999999999 V13.5 A3.7 3.7 0 0 1 13.5 17.2 H13.399999999999999 A3.7 3.7 0 0 1 9.7 13.5 V10.899999999999999 A1.2 1.2 0 0 1 10.899999999999999 9.7Z"/></g></svg><div class="t" style="left:388px;top:1122.5px;font-size:18px;color:#333">福建省</div>
<div class="a" style="left:562px;top:985px;width:7px;height:74px;border-radius:4px;background:#5a7cf0"></div>
<div class="a" style="left:290px;top:796px;width:278px;height:142px;border-radius:10px;background:#f4f6fa"></div>
<div class="t" style="left:306px;top:812.5px;font-size:16px;color:#444">广东省 珠海市</div>
<div class="t" style="left:306px;top:842.5px;font-size:16px;color:#444">广东省 珠海市 香洲区</div>
<div class="t" style="left:306px;top:872.5px;font-size:16px;color:#444">广东省 珠海市 金湾区</div>
<div class="t" style="left:306px;top:902.5px;font-size:16px;color:#444">广东省 珠海市 高新区</div>
<div class="a" style="left:290px;top:1185px;width:278px;height:45px;border-radius:10px;background:#f3f5f8"></div>
<div class="t" style="left:306px;top:1199.5px;font-size:16px;color:#a8a8a8">请输入省市区名称</div>
<div class="a" style="left:341px;top:1278px;width:0;height:201px;border-left:1px dotted #b4b4b4"></div>
<div class="a" style="left:304px;top:1263.5px;width:14px;height:14px;border:1px solid #808080;background:linear-gradient(180deg,#fdfdfd 0%,#d8d8d8 100%)"></div><div class="a" style="left:307px;top:1270.0px;width:8px;height:1.2px;background:#333"></div><div class="a" style="left:318px;top:1270.5px;width:13px;height:0;border-top:1px dotted #b4b4b4"></div><svg class="a" style="left:331px;top:1261.5px" width="18" height="18" viewBox="0 0 18 18"><path d="M9 1 L17 5.5 L9 10 L1 5.5Z" fill="#c9daf6" stroke="#2b52b4" stroke-width="1.3" stroke-linejoin="round"/><path d="M1.5 9 L9 13.2 L16.5 9" fill="none" stroke="#2b52b4" stroke-width="1.3"/><path d="M1.5 12.5 L9 16.7 L16.5 12.5" fill="none" stroke="#2b52b4" stroke-width="1.3"/></svg><div class="t" style="left:358px;top:1262.0px;font-size:18px;color:#333">全部</div>
<div class="a" style="left:334px;top:1304px;width:14px;height:14px;border:1px solid #808080;background:linear-gradient(180deg,#fdfdfd 0%,#d9e3f3 100%)"></div><div class="a" style="left:337px;top:1310.5px;width:8px;height:1.2px;background:#1c2f66"></div><div class="a" style="left:340.4px;top:1307px;width:1.2px;height:8px;background:#1c2f66"></div><div class="a" style="left:348px;top:1311px;width:14px;height:0;border-top:1px dotted #b4b4b4"></div><svg class="a" style="left:362px;top:1302px" width="18" height="18" viewBox="0 0 18 18"><g fill="#e6eefc" stroke="#223f8f" stroke-width="1.3"><path d="M4.5 0.8 H4.6000000000000005 A3.7 3.7 0 0 1 8.3 4.5 V7.1000000000000005 A1.2 1.2 0 0 1 7.1000000000000005 8.3 H4.5 A3.7 3.7 0 0 1 0.8 4.6000000000000005 V4.5 A3.7 3.7 0 0 1 4.5 0.8Z"/><path d="M13.399999999999999 0.8 H13.5 A3.7 3.7 0 0 1 17.2 4.5 V4.6000000000000005 A3.7 3.7 0 0 1 13.5 8.3 H10.899999999999999 A1.2 1.2 0 0 1 9.7 7.1000000000000005 V4.5 A3.7 3.7 0 0 1 13.399999999999999 0.8Z"/><path d="M4.5 9.7 H7.1000000000000005 A1.2 1.2 0 0 1 8.3 10.899999999999999 V13.5 A3.7 3.7 0 0 1 4.6000000000000005 17.2 H4.5 A3.7 3.7 0 0 1 0.8 13.5 V13.399999999999999 A3.7 3.7 0 0 1 4.5 9.7Z"/><path d="M10.899999999999999 9.7 H13.5 A3.7 3.7 0 0 1 17.2 13.399999999999999 V13.5 A3.7 3.7 0 0 1 13.5 17.2 H13.399999999999999 A3.7 3.7 0 0 1 9.7 13.5 V10.899999999999999 A1.2 1.2 0 0 1 10.899999999999999 9.7Z"/></g></svg><div class="t" style="left:388px;top:1302.5px;font-size:18px;color:#333">广东省</div>
<div class="a" style="left:341px;top:1349px;width:23px;height:0;border-top:1px dotted #b4b4b4"></div><div class="a" style="left:364px;top:1342px;width:14px;height:14px;border:1px solid #808080;background:linear-gradient(180deg,#fdfdfd 0%,#d9e3f3 100%)"></div><div class="a" style="left:367px;top:1348.5px;width:8px;height:1.2px;background:#1c2f66"></div><div class="a" style="left:370.4px;top:1345px;width:1.2px;height:8px;background:#1c2f66"></div><svg class="a" style="left:389px;top:1340px" width="18" height="18" viewBox="0 0 18 18"><g fill="#e6eefc" stroke="#223f8f" stroke-width="1.3"><path d="M4.5 0.8 H4.6000000000000005 A3.7 3.7 0 0 1 8.3 4.5 V7.1000000000000005 A1.2 1.2 0 0 1 7.1000000000000005 8.3 H4.5 A3.7 3.7 0 0 1 0.8 4.6000000000000005 V4.5 A3.7 3.7 0 0 1 4.5 0.8Z"/><path d="M13.399999999999999 0.8 H13.5 A3.7 3.7 0 0 1 17.2 4.5 V4.6000000000000005 A3.7 3.7 0 0 1 13.5 8.3 H10.899999999999999 A1.2 1.2 0 0 1 9.7 7.1000000000000005 V4.5 A3.7 3.7 0 0 1 13.399999999999999 0.8Z"/><path d="M4.5 9.7 H7.1000000000000005 A1.2 1.2 0 0 1 8.3 10.899999999999999 V13.5 A3.7 3.7 0 0 1 4.6000000000000005 17.2 H4.5 A3.7 3.7 0 0 1 0.8 13.5 V13.399999999999999 A3.7 3.7 0 0 1 4.5 9.7Z"/><path d="M10.899999999999999 9.7 H13.5 A3.7 3.7 0 0 1 17.2 13.399999999999999 V13.5 A3.7 3.7 0 0 1 13.5 17.2 H13.399999999999999 A3.7 3.7 0 0 1 9.7 13.5 V10.899999999999999 A1.2 1.2 0 0 1 10.899999999999999 9.7Z"/></g></svg><div class="t" style="left:414px;top:1340.5px;font-size:18px;color:#333">珠海市</div>
<div class="a" style="left:341px;top:1393px;width:23px;height:0;border-top:1px dotted #b4b4b4"></div><div class="a" style="left:364px;top:1386px;width:14px;height:14px;border:1px solid #808080;background:linear-gradient(180deg,#fdfdfd 0%,#d9e3f3 100%)"></div><div class="a" style="left:367px;top:1392.5px;width:8px;height:1.2px;background:#1c2f66"></div><div class="a" style="left:370.4px;top:1389px;width:1.2px;height:8px;background:#1c2f66"></div><svg class="a" style="left:389px;top:1384px" width="18" height="18" viewBox="0 0 18 18"><g fill="#e6eefc" stroke="#223f8f" stroke-width="1.3"><path d="M4.5 0.8 H4.6000000000000005 A3.7 3.7 0 0 1 8.3 4.5 V7.1000000000000005 A1.2 1.2 0 0 1 7.1000000000000005 8.3 H4.5 A3.7 3.7 0 0 1 0.8 4.6000000000000005 V4.5 A3.7 3.7 0 0 1 4.5 0.8Z"/><path d="M13.399999999999999 0.8 H13.5 A3.7 3.7 0 0 1 17.2 4.5 V4.6000000000000005 A3.7 3.7 0 0 1 13.5 8.3 H10.899999999999999 A1.2 1.2 0 0 1 9.7 7.1000000000000005 V4.5 A3.7 3.7 0 0 1 13.399999999999999 0.8Z"/><path d="M4.5 9.7 H7.1000000000000005 A1.2 1.2 0 0 1 8.3 10.899999999999999 V13.5 A3.7 3.7 0 0 1 4.6000000000000005 17.2 H4.5 A3.7 3.7 0 0 1 0.8 13.5 V13.399999999999999 A3.7 3.7 0 0 1 4.5 9.7Z"/><path d="M10.899999999999999 9.7 H13.5 A3.7 3.7 0 0 1 17.2 13.399999999999999 V13.5 A3.7 3.7 0 0 1 13.5 17.2 H13.399999999999999 A3.7 3.7 0 0 1 9.7 13.5 V10.899999999999999 A1.2 1.2 0 0 1 10.899999999999999 9.7Z"/></g></svg><div class="t" style="left:414px;top:1384.5px;font-size:18px;color:#333">深圳市</div>
<div class="a" style="left:334px;top:1430px;width:14px;height:14px;border:1px solid #808080;background:linear-gradient(180deg,#fdfdfd 0%,#d9e3f3 100%)"></div><div class="a" style="left:337px;top:1436.5px;width:8px;height:1.2px;background:#1c2f66"></div><div class="a" style="left:340.4px;top:1433px;width:1.2px;height:8px;background:#1c2f66"></div><div class="a" style="left:348px;top:1437px;width:14px;height:0;border-top:1px dotted #b4b4b4"></div><svg class="a" style="left:362px;top:1428px" width="18" height="18" viewBox="0 0 18 18"><g fill="#e6eefc" stroke="#223f8f" stroke-width="1.3"><path d="M4.5 0.8 H4.6000000000000005 A3.7 3.7 0 0 1 8.3 4.5 V7.1000000000000005 A1.2 1.2 0 0 1 7.1000000000000005 8.3 H4.5 A3.7 3.7 0 0 1 0.8 4.6000000000000005 V4.5 A3.7 3.7 0 0 1 4.5 0.8Z"/><path d="M13.399999999999999 0.8 H13.5 A3.7 3.7 0 0 1 17.2 4.5 V4.6000000000000005 A3.7 3.7 0 0 1 13.5 8.3 H10.899999999999999 A1.2 1.2 0 0 1 9.7 7.1000000000000005 V4.5 A3.7 3.7 0 0 1 13.399999999999999 0.8Z"/><path d="M4.5 9.7 H7.1000000000000005 A1.2 1.2 0 0 1 8.3 10.899999999999999 V13.5 A3.7 3.7 0 0 1 4.6000000000000005 17.2 H4.5 A3.7 3.7 0 0 1 0.8 13.5 V13.399999999999999 A3.7 3.7 0 0 1 4.5 9.7Z"/><path d="M10.899999999999999 9.7 H13.5 A3.7 3.7 0 0 1 17.2 13.399999999999999 V13.5 A3.7 3.7 0 0 1 13.5 17.2 H13.399999999999999 A3.7 3.7 0 0 1 9.7 13.5 V10.899999999999999 A1.2 1.2 0 0 1 10.899999999999999 9.7Z"/></g></svg><div class="t" style="left:388px;top:1428.5px;font-size:18px;color:#333">四川省</div>
<div class="a" style="left:334px;top:1472px;width:14px;height:14px;border:1px solid #808080;background:linear-gradient(180deg,#fdfdfd 0%,#d9e3f3 100%)"></div><div class="a" style="left:337px;top:1478.5px;width:8px;height:1.2px;background:#1c2f66"></div><div class="a" style="left:340.4px;top:1475px;width:1.2px;height:8px;background:#1c2f66"></div><div class="a" style="left:348px;top:1479px;width:14px;height:0;border-top:1px dotted #b4b4b4"></div><svg class="a" style="left:362px;top:1470px" width="18" height="18" viewBox="0 0 18 18"><g fill="#e6eefc" stroke="#223f8f" stroke-width="1.3"><path d="M4.5 0.8 H4.6000000000000005 A3.7 3.7 0 0 1 8.3 4.5 V7.1000000000000005 A1.2 1.2 0 0 1 7.1000000000000005 8.3 H4.5 A3.7 3.7 0 0 1 0.8 4.6000000000000005 V4.5 A3.7 3.7 0 0 1 4.5 0.8Z"/><path d="M13.399999999999999 0.8 H13.5 A3.7 3.7 0 0 1 17.2 4.5 V4.6000000000000005 A3.7 3.7 0 0 1 13.5 8.3 H10.899999999999999 A1.2 1.2 0 0 1 9.7 7.1000000000000005 V4.5 A3.7 3.7 0 0 1 13.399999999999999 0.8Z"/><path d="M4.5 9.7 H7.1000000000000005 A1.2 1.2 0 0 1 8.3 10.899999999999999 V13.5 A3.7 3.7 0 0 1 4.6000000000000005 17.2 H4.5 A3.7 3.7 0 0 1 0.8 13.5 V13.399999999999999 A3.7 3.7 0 0 1 4.5 9.7Z"/><path d="M10.899999999999999 9.7 H13.5 A3.7 3.7 0 0 1 17.2 13.399999999999999 V13.5 A3.7 3.7 0 0 1 13.5 17.2 H13.399999999999999 A3.7 3.7 0 0 1 9.7 13.5 V10.899999999999999 A1.2 1.2 0 0 1 10.899999999999999 9.7Z"/></g></svg><div class="t" style="left:388px;top:1470.5px;font-size:18px;color:#333">福建省</div>
<div class="a" style="left:562px;top:1302px;width:7px;height:75px;border-radius:4px;background:#5a7cf0"></div>
<div class="card" style="left:590px;top:257px;width:1306px;height:791px"></div>
<div class="a" style="left:590px;top:257px;width:1306px;height:56px;border-radius:10px 10px 0 0;background:#f6f7fb"></div>
<div class="a" style="left:772px;top:257px;width:85px;height:56px;background:#eef0fa"></div>
<div class="t" style="left:667px;top:278.5px;font-size:18px;color:#5b73d8;">全部</div>
<div class="a" style="left:660px;top:309px;width:49px;height:5px;border-radius:3px;background:#5b73e0"></div>
<div class="t" style="left:793px;top:279.5px;font-size:16px;color:#222;">待审核</div>
<div class="t" style="left:924px;top:279.5px;font-size:16px;color:#222;">已审核</div>
<svg class="a" style="left:626px;top:338px" width="24" height="24" viewBox="0 0 24 24"><circle cx="12" cy="12" r="10.8" fill="none" stroke="#3aa57a" stroke-width="1.6"/><path d="M12 6.5 V17.5 M6.5 12 H17.5" stroke="#3aa57a" stroke-width="1.6"/></svg>
<div class="t" style="left:658px;top:342.4px;font-size:14px;color:#555;">新建</div>
<svg class="a" style="left:722px;top:339px" width="23" height="21" viewBox="0 0 23 21"><path d="M1 2 Q1 1 2 1 H8 L10 3.5 H19 Q20 3.5 20 4.5 V7" fill="none" stroke="#f3c142" stroke-width="1.6"/><path d="M1 2 V19 Q1 20 2 20 H19.5 Q20.5 20 20.8 19 L22 8.5 Q22 7.5 21 7.5 H6 Q5 7.5 4.8 8.5 L3 19.5" fill="#fff8e0" stroke="#f3c142" stroke-width="1.6" stroke-linejoin="round"/></svg>
<div class="t" style="left:753px;top:342.4px;font-size:14px;color:#555;">编辑</div>
<svg class="a" style="left:817px;top:339px" width="22" height="20" viewBox="0 0 22 20"><path d="M1.5 1 V3.8 H20.5 V1 M1.5 19 V16.2 H20.5 V19" fill="none" stroke="#333" stroke-width="1.8"/><path d="M7 6.5 L15 13.5 M15 6.5 L7 13.5" stroke="#e8504a" stroke-width="1.5"/></svg>
<div class="t" style="left:849px;top:342.4px;font-size:14px;color:#555;">删除</div>
<svg class="a" style="left:913px;top:338px" width="22" height="22" viewBox="0 0 22 22"><path d="M5.5 10 V6.5 A5.5 5.5 0 0 1 16.5 6.5 V10" fill="none" stroke="#333" stroke-width="1.8"/><rect x="1.5" y="10.5" width="19" height="10" fill="#fff6d8" stroke="#f3c142" stroke-width="1.6"/><rect x="10" y="14.5" width="2.4" height="2" fill="#333"/></svg>
<div class="t" style="left:945px;top:342.4px;font-size:14px;color:#555;">锁定</div>
<svg class="a" style="left:1007px;top:337px" width="24" height="24" viewBox="0 0 24 24"><path d="M3 9.5 A9.8 9.8 0 0 1 21.2 6" fill="none" stroke="#3aa57a" stroke-width="1.7"/><path d="M21.8 1.5 V7.5 H16.5" fill="none" stroke="#3aa57a" stroke-width="1.7"/><path d="M21 14.5 A9.8 9.8 0 0 1 2.8 18" fill="none" stroke="#3aa57a" stroke-width="1.7"/><path d="M2.2 22.5 V16.5 H7.5" fill="none" stroke="#3aa57a" stroke-width="1.7"/></svg>
<div class="t" style="left:1040px;top:342.4px;font-size:14px;color:#555;">刷新</div>
<svg class="a" style="left:1104px;top:339px" width="21" height="20" viewBox="0 0 21 20"><path d="M12 3.5 H19.2 V18.2 H12" fill="none" stroke="#444" stroke-width="1.7"/><path d="M1 1.5 L13.5 0.8 V19.2 L1 18.5Z" fill="#e0f5ec" stroke="#4bb88a" stroke-width="1.6" stroke-linejoin="round"/><path d="M4.5 5.5 L10 14.5 M10 5.5 L4.5 14.5" stroke="#4bb88a" stroke-width="1.5"/></svg>
<div class="t" style="left:1135px;top:342.4px;font-size:14px;color:#555;">导出Excel</div>
<svg class="a" style="left:1234px;top:339px" width="22" height="21" viewBox="0 0 22 21"><path d="M14 3 V1.5 H1.5 V14 H3" fill="none" stroke="#444" stroke-width="1.6"/><path d="M5 5 H14.5 L20 10.5 V19.5 H5Z" fill="#fff" stroke="#444" stroke-width="1.6" stroke-linejoin="round"/><path d="M8.5 10.5 H14 M8.5 14.5 H16" stroke="#3a9ad0" stroke-width="1.6"/><path d="M1.5 16 V20 H5.5 M1.5 20 L4.5 17" stroke="#3a9ad0" stroke-width="1.4" fill="none"/></svg>
<div class="t" style="left:1266px;top:342.4px;font-size:14px;color:#555;">数据透视表</div>
<svg class="a" style="left:1372px;top:337px" width="22" height="24" viewBox="0 0 22 24"><path d="M1.5 2 H7.5 V17 L4.5 21.5 L1.5 17Z" fill="#d8f0fb" stroke="#3a7fc8" stroke-width="1.5" stroke-linejoin="round"/><rect x="11" y="1" width="9.5" height="21.5" fill="#fff" stroke="#444" stroke-width="1.7"/><path d="M11 6 H15 M11 10 H14 M11 14 H15 M11 18 H14" stroke="#444" stroke-width="1.4"/></svg>
<div class="t" style="left:1404px;top:342.4px;font-size:14px;color:#555;">设计模板</div>
<svg class="a" style="left:1495px;top:337px" width="24" height="24" viewBox="0 0 24 24"><circle cx="12" cy="12" r="10.8" fill="#fffdf2" stroke="#f0c63c" stroke-width="1.6"/><path d="M8.8 9.2 Q8.8 5.8 12 5.8 Q15.2 5.8 15.2 8.8 Q15.2 10.8 12.8 11.8 Q12 12.2 12 13.6 V14.6" fill="none" stroke="#f0c63c" stroke-width="1.6"/><circle cx="12" cy="17.5" r="1.1" fill="#f0c63c"/></svg>
<div class="t" style="left:1527px;top:342.4px;font-size:14px;color:#555;">帮助</div>
<div class="a" style="left:601px;top:386px;width:984px;height:60px;background:#f3f4f7"></div>
<div class="t" style="left:648px;top:408.5px;width:120px;text-align:center;font-size:16px;color:#444;">锁定</div>
<div class="t" style="left:801px;top:408.5px;width:120px;text-align:center;font-size:16px;color:#444;">订单编号</div>
<div class="t" style="left:1016px;top:408.5px;width:120px;text-align:center;font-size:16px;color:#444;">下单时间</div>
<div class="t" style="left:1178px;top:408.5px;width:120px;text-align:center;font-size:16px;color:#444;">订单类型</div>
<div class="t" style="left:1313px;top:408.5px;width:120px;text-align:center;font-size:16px;color:#444;">订单状态</div>
<div class="t" style="left:1437px;top:408.5px;width:120px;text-align:center;font-size:16px;color:#666;">创建人</div>
<div class="a" style="left:601px;top:445px;width:984px;height:1px;background:#e3e3e3"></div>
<div class="a" style="left:601px;top:506px;width:984px;height:1px;background:#e3e3e3"></div>
<div class="a" style="left:601px;top:565px;width:984px;height:1px;background:#e3e3e3"></div>
<div class="a" style="left:601px;top:625px;width:984px;height:1px;background:#e3e3e3"></div>
<div class="a" style="left:601px;top:684px;width:984px;height:1px;background:#e3e3e3"></div>
<div class="a" style="left:601px;top:744px;width:984px;height:1px;background:#e3e3e3"></div>
<div class="a" style="left:601px;top:803px;width:984px;height:1px;background:#e3e3e3"></div>
<div class="a" style="left:601px;top:862px;width:984px;height:1px;background:#e3e3e3"></div>
<div class="a" style="left:601px;top:922px;width:984px;height:1px;background:#e3e3e3"></div>
<div class="a" style="left:601px;top:981px;width:984px;height:1px;background:#e3e3e3"></div>
<div class="a" style="left:675px;top:446px;width:1px;height:535px;background:#e3e3e3"></div>
<div class="a" style="left:747px;top:446px;width:1px;height:535px;background:#e3e3e3"></div>
<div class="a" style="left:975px;top:446px;width:1px;height:535px;background:#e3e3e3"></div>
<div class="a" style="left:1183px;top:446px;width:1px;height:535px;background:#e3e3e3"></div>
<div class="a" style="left:1314px;top:446px;width:1px;height:535px;background:#e3e3e3"></div>
<div class="a" style="left:1452px;top:446px;width:1px;height:535px;background:#e3e3e3"></div>
<div class="t" style="left:624px;top:466.5px;font-size:16px;color:#444;">查询</div>
<div class="t" style="left:601px;top:526.0px;width:74px;text-align:center;font-size:18px;color:#555;-webkit-text-stroke:0">1</div>
<div class="a" style="left:700px;top:526px;width:16px;height:16px;border-radius:3px;border:1px solid #777;background:#fff"></div>
<div class="t" style="left:747px;top:526.0px;width:228px;text-align:center;font-size:18px;color:#444;letter-spacing:-1.1px;-webkit-text-stroke:0">522445222111JJHHJKLL</div>
<div class="t" style="left:975px;top:526.0px;width:201px;text-align:center;font-size:18px;color:#444;letter-spacing:-0.8px;-webkit-text-stroke:0">2023.05.10 10:00:03</div>
<div class="t" style="left:1183px;top:527.0px;width:131px;text-align:center;font-size:16px;color:#444;">网店订单</div>
<div class="t" style="left:1314px;top:527.0px;width:138px;text-align:center;font-size:16px;color:#6b8fe0;">进行中</div>
<div class="t" style="left:1452px;top:519.5px;width:92px;text-align:center;font-size:18px;color:#444;letter-spacing:-0.5px;-webkit-text-stroke:0">yaya</div>
<div class="t" style="left:601px;top:586.0px;width:74px;text-align:center;font-size:18px;color:#555;-webkit-text-stroke:0">2</div>
<div class="a" style="left:700px;top:586px;width:16px;height:16px;border-radius:3px;background:#5a7cf0"></div><svg class="a" style="left:700px;top:586px" width="16" height="16" viewBox="0 0 16 16"><path d="M3.5 8.2 L6.8 11.2 L12.5 4.8" fill="none" stroke="#fff" stroke-width="1.8"/></svg>
<div class="t" style="left:747px;top:586.0px;width:228px;text-align:center;font-size:18px;color:#444;letter-spacing:-1.1px;-webkit-text-stroke:0">522445222111JJHHJKLL</div>
<div class="t" style="left:975px;top:586.0px;width:201px;text-align:center;font-size:18px;color:#444;letter-spacing:-0.8px;-webkit-text-stroke:0">2023.05.10 10:00:03</div>
<div class="t" style="left:1183px;top:587.0px;width:131px;text-align:center;font-size:16px;color:#444;">网店订单</div>
<div class="t" style="left:1314px;top:587.0px;width:138px;text-align:center;font-size:16px;color:#5cc05a;">已完成</div>
<div class="t" style="left:1452px;top:579.5px;width:92px;text-align:center;font-size:18px;color:#444;letter-spacing:-0.5px;-webkit-text-stroke:0">yaya</div>
<div class="t" style="left:601px;top:644.5px;width:74px;text-align:center;font-size:18px;color:#555;-webkit-text-stroke:0">3</div>
<div class="a" style="left:700px;top:645px;width:16px;height:16px;border-radius:3px;border:1px solid #777;background:#fff"></div>
<div class="t" style="left:747px;top:644.5px;width:228px;text-align:center;font-size:18px;color:#444;letter-spacing:-1.1px;-webkit-text-stroke:0">522445222111JJHHJKLL</div>
<div class="t" style="left:975px;top:644.5px;width:201px;text-align:center;font-size:18px;color:#444;letter-spacing:-0.8px;-webkit-text-stroke:0">2023.05.10 10:00:03</div>
<div class="t" style="left:1183px;top:645.5px;width:131px;text-align:center;font-size:16px;color:#444;">网店订单</div>
<div class="t" style="left:1314px;top:645.5px;width:138px;text-align:center;font-size:16px;color:#6b8fe0;">进行中</div>
<div class="t" style="left:1452px;top:642.5px;width:92px;text-align:center;font-size:18px;color:#444;letter-spacing:-0.5px;-webkit-text-stroke:0">yaya</div>
<div class="t" style="left:601px;top:705.0px;width:74px;text-align:center;font-size:18px;color:#555;-webkit-text-stroke:0">4</div>
<div class="a" style="left:700px;top:706px;width:16px;height:16px;border-radius:3px;border:1px solid #777;background:#fff"></div>
<div class="t" style="left:747px;top:705.0px;width:228px;text-align:center;font-size:18px;color:#444;letter-spacing:-1.1px;-webkit-text-stroke:0">522445222111JJHHJKLL</div>
<div class="t" style="left:975px;top:705.0px;width:201px;text-align:center;font-size:18px;color:#444;letter-spacing:-0.8px;-webkit-text-stroke:0">2023.05.10 10:00:03</div>
<div class="t" style="left:1183px;top:706.0px;width:131px;text-align:center;font-size:16px;color:#444;">网店订单</div>
<div class="t" style="left:1314px;top:706.0px;width:138px;text-align:center;font-size:16px;color:#5cc05a;">已完成</div>
<div class="t" style="left:1452px;top:703.0px;width:92px;text-align:center;font-size:18px;color:#444;letter-spacing:-0.5px;-webkit-text-stroke:0">yaya</div>
<div class="t" style="left:601px;top:765.0px;width:74px;text-align:center;font-size:18px;color:#555;-webkit-text-stroke:0">5</div>
<div class="a" style="left:700px;top:766px;width:16px;height:16px;border-radius:3px;border:1px solid #777;background:#fff"></div>
<div class="t" style="left:747px;top:765.0px;width:228px;text-align:center;font-size:18px;color:#444;letter-spacing:-1.1px;-webkit-text-stroke:0">522445222111JJHHJKLL</div>
<div class="t" style="left:975px;top:765.0px;width:201px;text-align:center;font-size:18px;color:#444;letter-spacing:-0.8px;-webkit-text-stroke:0">2023.05.10 10:00:03</div>
<div class="t" style="left:1183px;top:766.0px;width:131px;text-align:center;font-size:16px;color:#444;">网店订单</div>
<div class="t" style="left:1314px;top:766.0px;width:138px;text-align:center;font-size:16px;color:#6b8fe0;">进行中</div>
<div class="t" style="left:1452px;top:763.0px;width:92px;text-align:center;font-size:18px;color:#444;letter-spacing:-0.5px;-webkit-text-stroke:0">yaya</div>
<div class="t" style="left:601px;top:825.0px;width:74px;text-align:center;font-size:18px;color:#555;-webkit-text-stroke:0">6</div>
<div class="a" style="left:700px;top:826px;width:16px;height:16px;border-radius:3px;border:1px solid #777;background:#fff"></div>
<div class="t" style="left:747px;top:825.0px;width:228px;text-align:center;font-size:18px;color:#444;letter-spacing:-1.1px;-webkit-text-stroke:0">522445222111JJHHJKLL</div>
<div class="t" style="left:975px;top:825.0px;width:201px;text-align:center;font-size:18px;color:#444;letter-spacing:-0.8px;-webkit-text-stroke:0">2023.05.10 10:00:03</div>
<div class="t" style="left:1183px;top:826.0px;width:131px;text-align:center;font-size:16px;color:#444;">网店订单</div>
<div class="t" style="left:1314px;top:826.0px;width:138px;text-align:center;font-size:16px;color:#6b8fe0;">进行中</div>
<div class="t" style="left:1452px;top:823.0px;width:92px;text-align:center;font-size:18px;color:#444;letter-spacing:-0.5px;-webkit-text-stroke:0">yaya</div>
<div class="t" style="left:601px;top:886.0px;width:74px;text-align:center;font-size:18px;color:#555;-webkit-text-stroke:0">7</div>
<div class="a" style="left:700px;top:886px;width:16px;height:16px;border-radius:3px;border:1px solid #777;background:#fff"></div>
<div class="t" style="left:747px;top:886.0px;width:228px;text-align:center;font-size:18px;color:#444;letter-spacing:-1.1px;-webkit-text-stroke:0">522445222111JJHHJKLL</div>
<div class="t" style="left:975px;top:886.0px;width:201px;text-align:center;font-size:18px;color:#444;letter-spacing:-0.8px;-webkit-text-stroke:0">2023.05.10 10:00:03</div>
<div class="t" style="left:1183px;top:887.0px;width:131px;text-align:center;font-size:16px;color:#444;">网店订单</div>
<div class="t" style="left:1314px;top:887.0px;width:138px;text-align:center;font-size:16px;color:#5cc05a;">已完成</div>
<div class="t" style="left:1452px;top:884.0px;width:92px;text-align:center;font-size:18px;color:#444;letter-spacing:-0.5px;-webkit-text-stroke:0">yaya</div>
<div class="t" style="left:601px;top:946.0px;width:74px;text-align:center;font-size:18px;color:#555;-webkit-text-stroke:0">8</div>
<div class="a" style="left:700px;top:946px;width:16px;height:16px;border-radius:3px;border:1px solid #777;background:#fff"></div>
<div class="t" style="left:747px;top:946.0px;width:228px;text-align:center;font-size:18px;color:#444;letter-spacing:-1.1px;-webkit-text-stroke:0">522445222111JJHHJKLL</div>
<div class="t" style="left:975px;top:946.0px;width:201px;text-align:center;font-size:18px;color:#444;letter-spacing:-0.8px;-webkit-text-stroke:0">2023.05.10 10:00:03</div>
<div class="t" style="left:1183px;top:947.0px;width:131px;text-align:center;font-size:16px;color:#444;">网店订单</div>
<div class="t" style="left:1314px;top:947.0px;width:138px;text-align:center;font-size:16px;color:#5cc05a;">已完成</div>
<div class="t" style="left:1452px;top:944.0px;width:92px;text-align:center;font-size:18px;color:#444;letter-spacing:-0.5px;-webkit-text-stroke:0">yaya</div>
<div class="a" style="left:936px;top:437px;width:41px;height:25px;border-radius:4px;background:#262626"></div>
<svg class="a" style="left:951px;top:461px" width="12" height="5" viewBox="0 0 12 5"><path d="M0 0 L6 5 L12 0Z" fill="#262626"/></svg>
<div class="t" style="left:936px;top:441.9px;width:41px;text-align:center;font-size:15px;color:#fff;font-weight:bold;-webkit-text-stroke:0">查询</div>
<div class="a" style="left:936px;top:474px;width:7.4px;height:7.4px;border-radius:50%;background:#222"></div>
<div class="a" style="left:945.7px;top:474px;width:7.4px;height:7.4px;border-radius:50%;background:#222"></div>
<div class="a" style="left:955.4px;top:474px;width:7.4px;height:7.4px;border-radius:50%;background:#222"></div>
<svg class="a" style="left:962px;top:486px" width="32" height="32" viewBox="0 0 32 32"><path d="M15 14.5 L27.5 26.5" stroke="#27bfc2" stroke-width="6.2" stroke-linecap="butt"/><path d="M16 15.5 L26.5 25.5" stroke="#a8f4f6" stroke-width="2"/><path d="M2.8 2 L23.6 8 L8.8 22.2Z" fill="#e2f9ff" stroke="#2b5bc6" stroke-width="2.5" stroke-linejoin="round"/></svg>
<svg class="a" style="left:1472px;top:105px" width="32" height="32" viewBox="0 0 32 32"><path d="M15 14.5 L27.5 26.5" stroke="#27bfc2" stroke-width="6.2" stroke-linecap="butt"/><path d="M16 15.5 L26.5 25.5" stroke="#a8f4f6" stroke-width="2"/><path d="M2.8 2 L23.6 8 L8.8 22.2Z" fill="#e2f9ff" stroke="#2b5bc6" stroke-width="2.5" stroke-linejoin="round"/></svg>
<div class="a" style="left:1597px;top:385px;width:278px;height:596px;border-radius:10px;background:#f2f4f7"></div>
<div class="a" style="left:1618px;top:410px;width:3px;height:17px;background:#1e4fc0"></div>
<div class="t" style="left:1629px;top:409.5px;font-size:18px;color:#222;font-weight:bold;">图片01标题</div>
<div class="a" style="left:1618px;top:630px;width:3px;height:17px;background:#1e4fc0"></div>
<div class="t" style="left:1629px;top:629.5px;font-size:18px;color:#222;font-weight:bold;">图片02标题</div>
<svg class="a" style="left:1615px;top:444px" width="242" height="162" viewBox="0 0 242 162">
<defs>
<clipPath id="c1"><rect x="0" y="0" width="242" height="162" rx="8"/></clipPath>
<clipPath id="mt1"><path d="M0 44 L8 36 L14 30 L21 22 L27 26 L32 34 L40 46 L46 38 L52 30 L56 27 L60 34 L66 43 L80 36 L95 29 L110 22 L122 16 L134 11 L142 9 L150 13 L160 19 L175 24 L190 28 L210 32 L225 34 L242 38 V162 H0Z"/></clipPath>
<filter id="b1" x="-20%" y="-20%" width="140%" height="140%"><feGaussianBlur stdDeviation="1.6"/></filter>
<filter id="b2" x="-30%" y="-30%" width="160%" height="160%"><feGaussianBlur stdDeviation="4"/></filter>
<filter id="n1" x="0" y="0" width="100%" height="100%"><feTurbulence type="fractalNoise" baseFrequency="0.1 0.22" numOctaves="3" seed="11"/><feColorMatrix values="0 0 0 0 0.07  0 0 0 0 0.08  0 0 0 0 0.11  -3 0 0 0 1.55"/></filter>
<filter id="n1w" x="0" y="0" width="100%" height="100%"><feTurbulence type="fractalNoise" baseFrequency="0.18 0.3" numOctaves="2" seed="5"/><feColorMatrix values="0 0 0 0 0.96  0 0 0 0 0.97  0 0 0 0 1  3 0 0 0 -1.4"/></filter>
<linearGradient id="sky1" x1="0" y1="0" x2="0" y2="1"><stop offset="0" stop-color="#1b4ea8"/><stop offset="1" stop-color="#2d6bc2"/></linearGradient>
<linearGradient id="m1" x1="0" y1="0" x2="0.3" y2="1"><stop offset="0" stop-color="#76777c"/><stop offset="0.45" stop-color="#8a92a0"/><stop offset="1" stop-color="#aab6c6"/></linearGradient>
</defs>
<g clip-path="url(#c1)">
<rect width="242" height="162" fill="url(#sky1)"/>
<g filter="url(#b2)">
<ellipse cx="112" cy="18" rx="36" ry="11" fill="#ead8e0" opacity="0.9"/>
<ellipse cx="8" cy="25" rx="20" ry="12" fill="#ead6dc" opacity="0.85"/>
<ellipse cx="236" cy="24" rx="12" ry="22" fill="#dfe6ee" opacity="0.75"/>
</g>
<g clip-path="url(#mt1)">
<rect width="242" height="162" fill="url(#m1)"/>
<g filter="url(#b1)">
<path d="M0 40 L21 22 L36 38 L38 72 L5 75Z" fill="#8e7a60" opacity="0.9"/>
<path d="M45 38 L56 27 L66 43 L62 62 L45 60Z" fill="#7a6c5e" opacity="0.85"/>
<path d="M95 30 L142 9 L160 20 L172 60 L150 85 L110 75Z" fill="#5c5e64" opacity="0.85"/>
<path d="M175 35 L242 42 V100 L205 95 L182 70Z" fill="#5e6676" opacity="0.7"/>
<path d="M12 80 L65 70 L112 95 L138 128 L108 160 L52 112Z" fill="#dde4ee" opacity="0.8"/>
<path d="M130 112 L200 118 L242 110 V162 H150Z" fill="#dde4ee" opacity="0.8"/>
<path d="M60 60 L75 55 L130 120 L118 128Z" fill="#3a3e48" opacity="0.6"/>
<path d="M150 70 L165 66 L215 130 L200 135Z" fill="#3a3e48" opacity="0.55"/>
<path d="M100 90 L112 88 L150 150 L138 155Z" fill="#40444e" opacity="0.5"/>
</g>
<rect width="242" height="162" filter="url(#n1)" opacity="0.85"/>
<rect width="242" height="162" filter="url(#n1w)" opacity="0.55"/>
<g filter="url(#b2)"><ellipse cx="175" cy="40" rx="26" ry="14" fill="#e6e8ee" opacity="0.75"/><ellipse cx="205" cy="55" rx="16" ry="10" fill="#e6e8ee" opacity="0.55"/></g>
</g>
<path d="M0 99 Q18 106 35 115 Q60 128 80 140 Q100 150 122 162 H0Z" fill="#2b2520"/>
<path d="M0 118 Q30 132 50 148 L62 162 H0Z" fill="#1a1816" opacity="0.7"/>
</g></svg>
<svg class="a" style="left:1615px;top:670px" width="242" height="162" viewBox="0 0 242 162">
<defs>
<clipPath id="c2"><rect x="0" y="0" width="242" height="162" rx="8"/></clipPath>
<clipPath id="mt2"><path d="M0 48 L20 38 L40 28 L48 24 L58 24 L68 40 L78 24 L92 20 L100 30 L110 45 L120 35 L130 22 L140 18 L150 25 L170 35 L200 50 L242 70 V162 H0Z"/></clipPath>
<linearGradient id="sky2" x1="0" y1="0" x2="0" y2="1"><stop offset="0" stop-color="#4a4548"/><stop offset="0.55" stop-color="#7c7779"/><stop offset="1" stop-color="#9c9899"/></linearGradient>
<linearGradient id="gr2" x1="0" y1="0" x2="1" y2="1"><stop offset="0" stop-color="#4a8426"/><stop offset="0.5" stop-color="#74a636"/><stop offset="1" stop-color="#35641e"/></linearGradient>
<linearGradient id="or2" x1="0" y1="0" x2="0.4" y2="1"><stop offset="0" stop-color="#c87a42"/><stop offset="0.6" stop-color="#b0602e"/><stop offset="1" stop-color="#7a3a1c"/></linearGradient>
<filter id="b3" x="-20%" y="-20%" width="140%" height="140%"><feGaussianBlur stdDeviation="2.5"/></filter>
<filter id="b4" x="-30%" y="-30%" width="160%" height="160%"><feGaussianBlur stdDeviation="5"/></filter>
<filter id="n2" x="0" y="0" width="100%" height="100%"><feTurbulence type="fractalNoise" baseFrequency="0.15 0.3" numOctaves="3" seed="7"/><feColorMatrix values="0 0 0 0 0.2  0 0 0 0 0.15  0 0 0 0 0.15  -2 0 0 0 1.1"/></filter>
</defs>
<g clip-path="url(#c2)">
<rect width="242" height="162" fill="url(#sky2)"/>
<g filter="url(#b4)">
<ellipse cx="12" cy="38" rx="22" ry="10" fill="#b4b0b2"/>
<ellipse cx="108" cy="36" rx="16" ry="16" fill="#dcdadc"/>
<ellipse cx="228" cy="40" rx="20" ry="26" fill="#e6e6e8"/>
<ellipse cx="170" cy="12" rx="70" ry="14" fill="#3a3638"/>
</g>
<g clip-path="url(#mt2)">
<rect width="242" height="162" fill="#8a7878"/>
<g filter="url(#b3)">
<path d="M0 50 L48 24 L70 40 L75 85 L35 100 L0 85Z" fill="#a89494" opacity="0.85"/>
<path d="M75 28 L92 20 L110 48 L100 80 L78 70Z" fill="#7a5e5e" opacity="0.85"/>
<path d="M118 35 L140 18 L155 35 L162 90 L138 98 L120 60Z" fill="#a8583e" opacity="0.9"/>
<path d="M155 30 L200 50 L242 72 V110 L190 100 L160 70Z" fill="#55474a" opacity="0.85"/>
<path d="M60 80 L120 75 L160 100 L135 140 L90 140Z" fill="#5a5052" opacity="0.85"/>
<path d="M40 70 L85 60 L115 85 L85 105Z" fill="#b8aaaa" opacity="0.6"/>
</g>
<rect width="242" height="162" filter="url(#n2)" opacity="0.5"/>
</g>
<path d="M0 88 L30 95 L60 106 L95 126 L125 146 L132 162 H0Z" fill="url(#gr2)"/>
<path d="M15 112 L65 118 L100 138 L60 150 L15 140Z" fill="#9cc252" opacity="0.6" filter="url(#b3)"/>
<path d="M0 92 L40 100 L20 110 L0 108Z" fill="#8fb848" opacity="0.5" filter="url(#b3)"/>
<path d="M118 162 L135 140 L150 118 L162 108 L172 125 L168 162Z" fill="#6e4a3a"/><path d="M148 162 L158 130 L172 100 L188 84 L205 70 L222 62 L242 56 V162Z" fill="url(#or2)"/>
<path d="M195 80 L242 60 V162 H212 L205 112Z" fill="#cd8046" opacity="0.65" filter="url(#b3)"/>
</g></svg>
<div class="t" style="left:1030px;top:1008.4px;font-size:14px;color:#4a6bc8;">共 23 条</div>
<div class="t" style="left:1093px;top:1008.4px;font-size:14px;color:#4a6bc8;">每页 25 条</div>
<svg class="a" style="left:1165px;top:1011px" width="10" height="6" viewBox="0 0 10 6"><path d="M0 6 L5 0 L10 6Z" fill="#5a7cf0"/></svg>
<div class="a" style="left:1197px;top:1003px;width:61px;height:24px;border-radius:3px;border:1px solid #bbb;background:#fff"></div>
<div class="t" style="left:1197px;top:1008.4px;width:61px;text-align:center;font-size:14px;color:#aaa;">上一页</div>
<div class="a" style="left:1266px;top:1003px;width:23px;height:24px;border-radius:3px;border:1px solid #bbb;background:#fff"></div>
<div class="t" style="left:1266px;top:1008.4px;width:23px;text-align:center;font-size:14px;color:#aaa;">1</div>
<div class="a" style="left:1298px;top:1003px;width:23px;height:24px;border-radius:3px;border:1px solid #bbb;background:#fff"></div>
<div class="t" style="left:1298px;top:1008.4px;width:23px;text-align:center;font-size:14px;color:#aaa;">2</div>
<div class="a" style="left:1330px;top:1003px;width:24px;height:24px;border-radius:3px;background:#5a7cf0"></div>
<div class="t" style="left:1330px;top:1008.4px;width:24px;text-align:center;font-size:14px;color:#fff;">3</div>
<div class="a" style="left:1362px;top:1003px;width:24px;height:24px;border-radius:3px;border:1px solid #bbb;background:#fff"></div>
<div class="t" style="left:1362px;top:1008.4px;width:24px;text-align:center;font-size:14px;color:#aaa;">···</div>
<div class="a" style="left:1394px;top:1003px;width:61px;height:24px;border-radius:3px;border:1px solid #bbb;background:#fff"></div>
<div class="t" style="left:1394px;top:1008.4px;width:61px;text-align:center;font-size:14px;color:#aaa;">下一页</div>
<div class="card" style="left:590px;top:1063px;width:1306px;height:475px"></div>
<div class="a" style="left:590px;top:1063px;width:1306px;height:54px;border-radius:10px 10px 0 0;background:#f6f7fb"></div>
<div class="t" style="left:649px;top:1081.5px;font-size:18px;color:#5b73d8;">商品明细</div>
<div class="a" style="left:660px;top:1114px;width:49px;height:4px;border-radius:2px;background:#5b73e0"></div>
<div class="t" style="left:790px;top:1082.5px;font-size:16px;color:#222;">冻结3列</div>
<div class="t" style="left:935px;top:1082.5px;font-size:16px;color:#222;">冻结4列</div>
<div class="t" style="left:1081px;top:1082.5px;font-size:16px;color:#222;">冻结5列</div>
<div class="t" style="left:1226px;top:1082.5px;font-size:16px;color:#222;">冻结6列</div>
<div class="t" style="left:1376px;top:1082.5px;font-size:16px;color:#222;">不冻结</div>
<svg class="a" style="left:628px;top:1140px" width="24" height="24" viewBox="0 0 24 24"><circle cx="12" cy="12" r="10.8" fill="none" stroke="#3aa57a" stroke-width="1.6"/><path d="M12 6.5 V17.5 M6.5 12 H17.5" stroke="#3aa57a" stroke-width="1.6"/></svg>
<div class="t" style="left:661px;top:1145.4px;font-size:14px;color:#555;">新建</div>
<svg class="a" style="left:727px;top:1141px" width="23" height="21" viewBox="0 0 23 21"><path d="M1 2 Q1 1 2 1 H8 L10 3.5 H19 Q20 3.5 20 4.5 V7" fill="none" stroke="#c8c8c8" stroke-width="1.6"/><path d="M1 2 V19 Q1 20 2 20 H19.5 Q20.5 20 20.8 19 L22 8.5 Q22 7.5 21 7.5 H6 Q5 7.5 4.8 8.5 L3 19.5" fill="#fafafa" stroke="#c8c8c8" stroke-width="1.6" stroke-linejoin="round"/></svg>
<div class="t" style="left:760px;top:1145.4px;font-size:14px;color:#bbb;">编辑</div>
<svg class="a" style="left:825px;top:1142px" width="22" height="20" viewBox="0 0 22 20"><path d="M1.5 1 V3.8 H20.5 V1 M1.5 19 V16.2 H20.5 V19" fill="none" stroke="#333" stroke-width="1.8"/><path d="M7 6.5 L15 13.5 M15 6.5 L7 13.5" stroke="#e8504a" stroke-width="1.5"/></svg>
<div class="t" style="left:858px;top:1145.4px;font-size:14px;color:#555;">删除</div>
<svg class="a" style="left:923px;top:1140px" width="22" height="22" viewBox="0 0 22 22"><path d="M5.5 10 V6.5 A5.5 5.5 0 0 1 16.5 6.5 V10" fill="none" stroke="#aaa" stroke-width="1.8"/><rect x="1.5" y="10.5" width="19" height="10" fill="#fff" stroke="#bbb" stroke-width="1.4"/><rect x="10" y="14.5" width="2.4" height="2" fill="#888"/></svg>
<div class="t" style="left:956px;top:1145.4px;font-size:14px;color:#bbb;">锁定</div>
<svg class="a" style="left:1020px;top:1140px" width="24" height="24" viewBox="0 0 24 24"><path d="M3 9.5 A9.8 9.8 0 0 1 21.2 6" fill="none" stroke="#3aa57a" stroke-width="1.7"/><path d="M21.8 1.5 V7.5 H16.5" fill="none" stroke="#3aa57a" stroke-width="1.7"/><path d="M21 14.5 A9.8 9.8 0 0 1 2.8 18" fill="none" stroke="#3aa57a" stroke-width="1.7"/><path d="M2.2 22.5 V16.5 H7.5" fill="none" stroke="#3aa57a" stroke-width="1.7"/></svg>
<div class="t" style="left:1054px;top:1145.4px;font-size:14px;color:#555;">刷新</div>
<svg class="a" style="left:1120px;top:1140px" width="22" height="22" viewBox="0 0 22 22"><rect x="1" y="1" width="15.5" height="16" fill="#e6f6ee" stroke="#4bb88a" stroke-width="1.6"/><path d="M4.5 4.5 L13 13.5 M13 4.5 L4.5 13.5" stroke="#4bb88a" stroke-width="1.4"/><path d="M19.5 4 V20.5 H5" fill="none" stroke="#333" stroke-width="1.6"/><circle cx="19.5" cy="1.5" r="1" fill="#333"/></svg>
<div class="t" style="left:1152px;top:1145.4px;font-size:14px;color:#555;">批量导入</div>
<svg class="a" style="left:1248px;top:1142px" width="21" height="20" viewBox="0 0 21 20"><path d="M12 3.5 H19.2 V18.2 H12" fill="none" stroke="#444" stroke-width="1.7"/><path d="M1 1.5 L13.5 0.8 V19.2 L1 18.5Z" fill="#e0f5ec" stroke="#4bb88a" stroke-width="1.6" stroke-linejoin="round"/><path d="M4.5 5.5 L10 14.5 M10 5.5 L4.5 14.5" stroke="#4bb88a" stroke-width="1.5"/></svg>
<div class="t" style="left:1280px;top:1145.4px;font-size:14px;color:#555;">导出Excel</div>
<svg class="a" style="left:1382px;top:1142px" width="22" height="21" viewBox="0 0 22 21"><path d="M14 3 V1.5 H1.5 V14 H3" fill="none" stroke="#444" stroke-width="1.6"/><path d="M5 5 H14.5 L20 10.5 V19.5 H5Z" fill="#fff" stroke="#444" stroke-width="1.6" stroke-linejoin="round"/><path d="M8.5 10.5 H14 M8.5 14.5 H16" stroke="#3a9ad0" stroke-width="1.6"/><path d="M1.5 16 V20 H5.5 M1.5 20 L4.5 17" stroke="#3a9ad0" stroke-width="1.4" fill="none"/></svg>
<div class="t" style="left:1414px;top:1145.4px;font-size:14px;color:#555;">数据透视表</div>
<svg class="a" style="left:1524px;top:1140px" width="22" height="24" viewBox="0 0 22 24"><path d="M1.5 2 H7.5 V17 L4.5 21.5 L1.5 17Z" fill="#d8f0fb" stroke="#3a7fc8" stroke-width="1.5" stroke-linejoin="round"/><rect x="11" y="1" width="9.5" height="21.5" fill="#fff" stroke="#444" stroke-width="1.7"/><path d="M11 6 H15 M11 10 H14 M11 14 H15 M11 18 H14" stroke="#444" stroke-width="1.4"/></svg>
<div class="t" style="left:1557px;top:1145.4px;font-size:14px;color:#555;">设计模板</div>
<svg class="a" style="left:1650px;top:1140px" width="24" height="24" viewBox="0 0 24 24"><circle cx="12" cy="12" r="10.8" fill="#fffdf2" stroke="#f0c63c" stroke-width="1.6"/><path d="M8.8 9.2 Q8.8 5.8 12 5.8 Q15.2 5.8 15.2 8.8 Q15.2 10.8 12.8 11.8 Q12 12.2 12 13.6 V14.6" fill="none" stroke="#f0c63c" stroke-width="1.6"/><circle cx="12" cy="17.5" r="1.1" fill="#f0c63c"/></svg>
<div class="t" style="left:1684px;top:1145.4px;font-size:14px;color:#555;">帮助</div>
<div class="a" style="left:609px;top:1187px;width:1202px;height:52px;background:linear-gradient(180deg,#f3f5f9 0%,#dfe5ee 100%)"></div>
<div class="a" style="left:609px;top:1290px;width:1202px;height:51px;background:#f4f7fc"></div>
<div class="a" style="left:609px;top:1392px;width:1202px;height:51px;background:#f4f4f4"></div>
<div class="a" style="left:609px;top:1187px;width:1202px;height:1px;background:#d3dbe5"></div>
<div class="a" style="left:609px;top:1238px;width:1202px;height:1px;background:#d3dbe5"></div>
<div class="a" style="left:609px;top:1289px;width:1202px;height:1px;background:#d3dbe5"></div>
<div class="a" style="left:609px;top:1340px;width:1202px;height:1px;background:#d3dbe5"></div>
<div class="a" style="left:609px;top:1391px;width:1202px;height:1px;background:#d3dbe5"></div>
<div class="a" style="left:609px;top:1442px;width:1202px;height:1px;background:#d3dbe5"></div>
<div class="a" style="left:609px;top:1493px;width:1202px;height:1px;background:#d3dbe5"></div>
<div class="a" style="left:609px;top:1187px;width:1px;height:307px;background:#d3dbe5"></div>
<div class="a" style="left:674px;top:1187px;width:1px;height:307px;background:#d3dbe5"></div>
<div class="a" style="left:785px;top:1187px;width:1px;height:307px;background:#d3dbe5"></div>
<div class="a" style="left:1066px;top:1187px;width:1px;height:307px;background:#d3dbe5"></div>
<div class="a" style="left:1282px;top:1187px;width:1px;height:307px;background:#d3dbe5"></div>
<div class="a" style="left:1463px;top:1187px;width:1px;height:307px;background:#d3dbe5"></div>
<div class="a" style="left:1629px;top:1187px;width:1px;height:307px;background:#d3dbe5"></div>
<div class="a" style="left:1810px;top:1187px;width:1px;height:307px;background:#d3dbe5"></div>
<div class="t" style="left:674px;top:1205.5px;width:111px;text-align:center;font-size:16px;color:#444;">锁定</div>
<div class="t" style="left:785px;top:1205.5px;width:281px;text-align:center;font-size:16px;color:#444;">会议主题</div>
<div class="t" style="left:1066px;top:1205.5px;width:216px;text-align:center;font-size:16px;color:#444;">会议类型</div>
<div class="t" style="left:1282px;top:1205.5px;width:181px;text-align:center;font-size:16px;color:#444;">会议地址</div>
<div class="t" style="left:1463px;top:1205.5px;width:166px;text-align:center;font-size:16px;color:#444;">会议类型</div>
<div class="t" style="left:1625.5px;top:1205.5px;width:181px;text-align:center;font-size:16px;color:#444;">会议类型</div>
<div class="t" style="left:624px;top:1258.5px;font-size:16px;color:#444;">查询</div>
<div class="t" style="left:609px;top:1307.5px;width:65px;text-align:center;font-size:18px;color:#555;-webkit-text-stroke:0">1</div>
<div class="a" style="left:719px;top:1307px;width:16px;height:16px;border-radius:3px;background:#5a7cf0"></div><svg class="a" style="left:719px;top:1307px" width="16" height="16" viewBox="0 0 16 16"><path d="M3.5 8.2 L6.8 11.2 L12.5 4.8" fill="none" stroke="#fff" stroke-width="1.8"/></svg>
<div class="t" style="left:785px;top:1308.5px;width:281px;text-align:center;font-size:16px;color:#555;">保密业务保密业务培训</div>
<div class="t" style="left:1066px;top:1308.5px;width:216px;text-align:center;font-size:16px;color:#555;">保密委员会</div>
<div class="t" style="left:1282px;top:1308.5px;width:181px;text-align:center;font-size:16px;color:#555;">公司接待室</div>
<div class="t" style="left:1463px;top:1308.5px;width:166px;text-align:center;font-size:16px;color:#555;">保密委员会</div>
<div class="t" style="left:1625.5px;top:1308.5px;width:181px;text-align:center;font-size:16px;color:#555;">保密委员会</div>
<div class="t" style="left:609px;top:1358.5px;width:65px;text-align:center;font-size:18px;color:#555;-webkit-text-stroke:0">2</div>
<div class="a" style="left:719px;top:1358px;width:16px;height:16px;border-radius:3px;border:1px solid #d8d8d8;background:#fff"></div>
<div class="t" style="left:785px;top:1359.5px;width:281px;text-align:center;font-size:16px;color:#555;">保密制度保密制度讨论会议</div>
<div class="t" style="left:1066px;top:1359.5px;width:216px;text-align:center;font-size:16px;color:#555;">保密委员会</div>
<div class="t" style="left:1282px;top:1359.5px;width:181px;text-align:center;font-size:16px;color:#555;">公司第二会议室</div>
<div class="t" style="left:1463px;top:1359.5px;width:166px;text-align:center;font-size:16px;color:#555;">保密委员会</div>
<div class="t" style="left:1625.5px;top:1359.5px;width:181px;text-align:center;font-size:16px;color:#555;">保密委员会</div>
<div class="t" style="left:609px;top:1409.5px;width:65px;text-align:center;font-size:18px;color:#555;-webkit-text-stroke:0">3</div>
<div class="a" style="left:719px;top:1409px;width:16px;height:16px;border-radius:3px;border:1px solid #d8d8d8;background:#fff"></div>
<div class="t" style="left:785px;top:1410.5px;width:281px;text-align:center;font-size:16px;color:#555;">保密业务保密业务培训</div>
<div class="t" style="left:1066px;top:1410.5px;width:216px;text-align:center;font-size:16px;color:#555;">基层处室会议</div>
<div class="t" style="left:1282px;top:1410.5px;width:181px;text-align:center;font-size:16px;color:#555;">公司接待室</div>
<div class="t" style="left:1463px;top:1410.5px;width:166px;text-align:center;font-size:16px;color:#555;">基层处室会议</div>
<div class="t" style="left:1625.5px;top:1410.5px;width:181px;text-align:center;font-size:16px;color:#555;">基层处室会议</div>
<div class="t" style="left:609px;top:1460.5px;width:65px;text-align:center;font-size:18px;color:#555;-webkit-text-stroke:0">4</div>
<div class="a" style="left:719px;top:1460px;width:16px;height:16px;border-radius:3px;border:1px solid #d8d8d8;background:#fff"></div>
<div class="t" style="left:785px;top:1461.5px;width:281px;text-align:center;font-size:16px;color:#555;">保密制度保密制度讨论会议</div>
<div class="t" style="left:1066px;top:1461.5px;width:216px;text-align:center;font-size:16px;color:#555;">基层处室会议</div>
<div class="t" style="left:1282px;top:1461.5px;width:181px;text-align:center;font-size:16px;color:#555;">公司第一会议室</div>
<div class="t" style="left:1463px;top:1461.5px;width:166px;text-align:center;font-size:16px;color:#555;">基层处室会议</div>
<div class="t" style="left:1625.5px;top:1461.5px;width:181px;text-align:center;font-size:16px;color:#555;">基层处室会议</div>
<div class="a" style="left:1021px;top:1224px;width:41px;height:25px;border-radius:4px;background:#262626"></div>
<svg class="a" style="left:1035px;top:1248px" width="12" height="5" viewBox="0 0 12 5"><path d="M0 0 L6 5 L12 0Z" fill="#262626"/></svg>
<div class="t" style="left:1021px;top:1229.0px;width:41px;text-align:center;font-size:15px;color:#fff;font-weight:bold;-webkit-text-stroke:0">查询</div>
<div class="a" style="left:1023.8px;top:1262px;width:6.5px;height:6.5px;border-radius:50%;background:#222"></div>
<div class="a" style="left:1033.2px;top:1262px;width:6.5px;height:6.5px;border-radius:50%;background:#222"></div>
<div class="a" style="left:1042.6px;top:1262px;width:6.5px;height:6.5px;border-radius:50%;background:#222"></div>
<svg class="a" style="left:1047px;top:1274px" width="32" height="32" viewBox="0 0 32 32"><path d="M15 14.5 L27.5 26.5" stroke="#27bfc2" stroke-width="6.2" stroke-linecap="butt"/><path d="M16 15.5 L26.5 25.5" stroke="#a8f4f6" stroke-width="2"/><path d="M2.8 2 L23.6 8 L8.8 22.2Z" fill="#e2f9ff" stroke="#2b5bc6" stroke-width="2.5" stroke-linejoin="round"/></svg>
<div class="a" style="left:1829px;top:1186px;width:16px;height:308px;background:#f0f0f0"></div>
<div class="a" style="left:1830px;top:1202px;width:14px;height:25px;background:#c9c9c9"></div>
<svg class="a" style="left:1831px;top:1189px" width="12" height="8" viewBox="0 0 12 8"><path d="M2 6.5 L6 2.5 L10 6.5" stroke="#333" stroke-width="1.6" fill="none"/></svg>
</body></html>
